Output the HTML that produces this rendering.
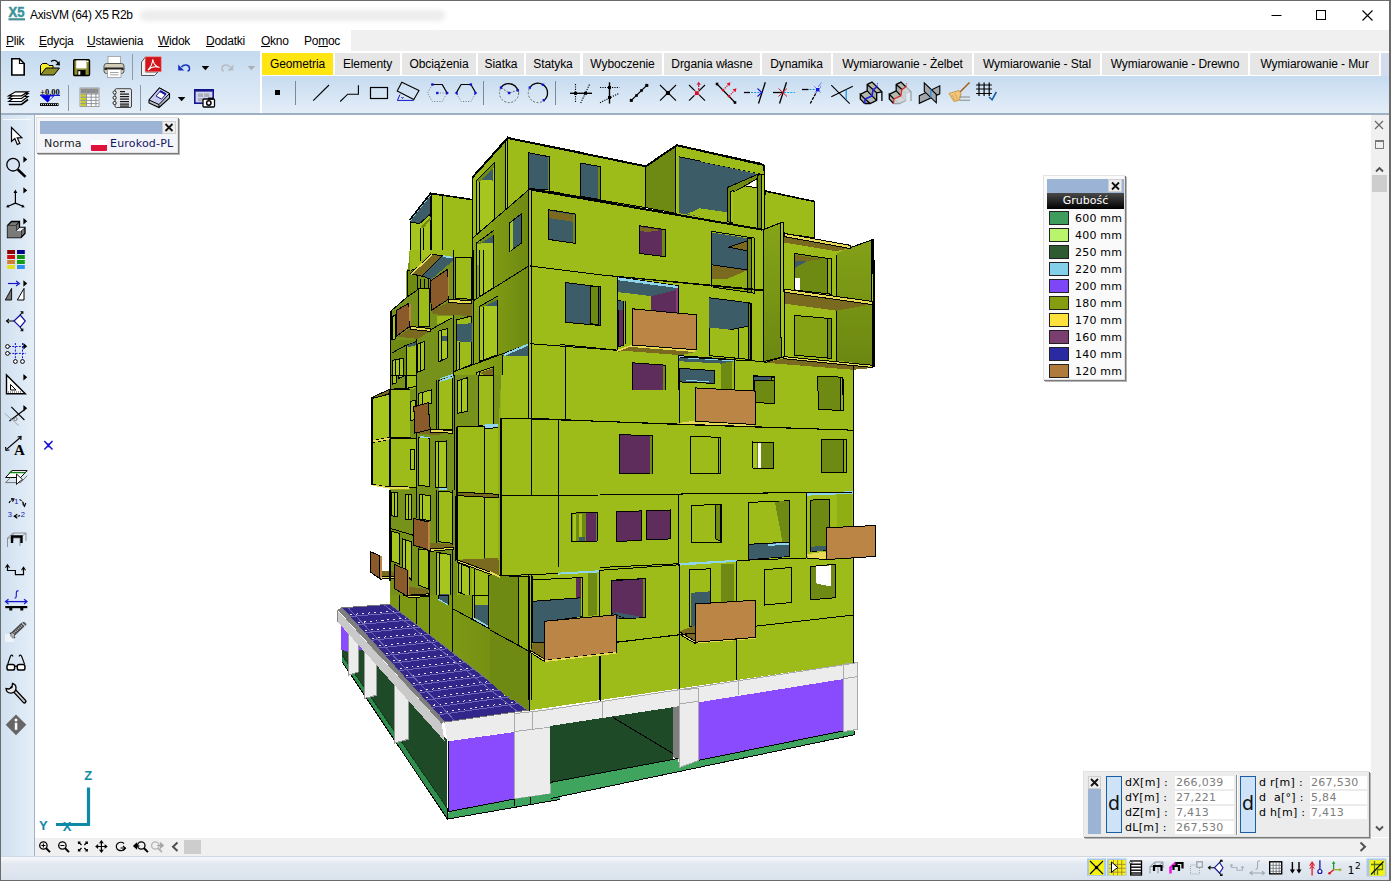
<!DOCTYPE html>
<html lang="pl">
<head>
<meta charset="utf-8">
<title>AxisVM (64) X5 R2b</title>
<style>
*{box-sizing:border-box;margin:0;padding:0}
html,body{width:1391px;height:881px;overflow:hidden;background:#fff}
body{position:relative;font-family:"Liberation Sans",sans-serif;font-size:12px;color:#000}
.abs{position:absolute}
#win{position:absolute;left:0;top:0;width:1391px;height:881px;background:#fff;overflow:hidden}
#frame{position:absolute;left:0;top:0;width:1391px;height:881px;border:1px solid #6b6b6b;border-right:2px solid #6b6b6b;border-bottom:none;pointer-events:none;z-index:50}
#title{left:0;top:0;width:1391px;height:30px;background:#fff}
#title .t{position:absolute;left:30px;top:8px;font-size:12px;letter-spacing:-0.34px;color:#000}
#menubar{left:0;top:30px;width:1391px;height:21px;background:#f0f0f0}
#menubar .w{position:absolute;left:0;top:0;width:351px;height:21px;background:#fff}
#menubar span{position:absolute;top:4px;font-size:12px;letter-spacing:-0.25px;white-space:nowrap}
#menubar u{text-decoration:underline;text-underline-offset:1px}
#tbleft{left:0;top:51px;width:260px;height:62px;background:linear-gradient(#c4daef,#e4eef8)}
#tabrow{left:260px;top:51px;width:1129px;height:25px;background:#fff}
.tab{position:absolute;top:2px;height:22px;background:#e6e6e6;font-size:12px;text-align:center;line-height:22px;white-space:nowrap;letter-spacing:-0.1px}
.tab.sel{background:#ffe512}
#tbgeo{left:262px;top:76px;width:1127px;height:37px;background:linear-gradient(#c6dbf0,#e4eef8)}
#tbline{left:0;top:113px;width:1391px;height:2px;background:#9fb0c2}
#lefttb{left:0;top:115px;width:35px;height:741px;background:linear-gradient(90deg,#d0e0f0,#e4eef8);border-right:1px solid #a3b3c4}
#view{left:35px;top:115px;width:1336px;height:723px;background:#fff}
#vscroll{left:1371px;top:115px;width:20px;height:722px;background:#f0f0f0}
#hscroll{left:35px;top:838px;width:1356px;height:18px;background:#f0f0f0}
#status{left:0;top:856px;width:1391px;height:25px;background:linear-gradient(#f6f8fb,#e3e9f1 30%,#d9e2ec);border-top:1px solid #cfd8e2;border-bottom:1px solid #6b6b6b}
.dv{font-family:"DejaVu Sans","Liberation Sans",sans-serif}

.pnl{position:absolute;background:#f4f4f4;border:1px solid #e3e3e3;box-shadow:1px 1px 0 #7a7a7a, 2px 2px 0 #b5b5b5;z-index:20}
.pnl .bar{position:absolute;background:#9bb4d6}
.xb{position:absolute;background:#ededed;border:1px solid #cfcfcf}
.xb svg{position:absolute;left:0;top:0}
#leg .hd{position:absolute;left:3px;top:17px;width:77px;height:16px;background:linear-gradient(#4a4a4a,#000);color:#fff;font-size:11px;text-align:center;line-height:15px}
#leg .r{position:absolute;left:5px;width:76px;height:14px;font-size:11px;line-height:14px;white-space:nowrap}
#leg .r i{position:absolute;left:0;top:0;width:20px;height:14px;border:1px solid #222}
#leg .r span{position:absolute;left:26px;top:1px;letter-spacing:0.2px}
#crd{font-size:11px;line-height:13px}
#crd .lb{position:absolute;white-space:nowrap;letter-spacing:0.3px}
#crd .vb{position:absolute;background:#fff;height:13px;color:#7d7d7d;padding-left:1px;white-space:nowrap;letter-spacing:0.3px}
#crd .d{position:absolute;background:#cfe3f8;border:1px solid #1a5da6;font-size:19px;line-height:52px;text-align:center;color:#111}
.sbtn{position:absolute;color:#505050}
</style>
</head>
<body>
<div id="win">
<div id="title" class="abs"><span class="t">AxisVM (64) X5 R2b</span></div>
<div id="menubar" class="abs"><div class="w"></div>
<span style="left:6px"><u>P</u>lik</span>
<span style="left:39px"><u>E</u>dycja</span>
<span style="left:87px"><u>U</u>stawienia</span>
<span style="left:158px"><u>W</u>idok</span>
<span style="left:206px"><u>D</u>odatki</span>
<span style="left:261px"><u>O</u>kno</span>
<span style="left:304px">Po<u>m</u>oc</span>
</div>
<div id="tbleft" class="abs"></div>
<div id="tabrow" class="abs">
<div class="tab sel" style="left:2px;width:71px">Geometria</div>
<div class="tab" style="left:75px;width:65px">Elementy</div>
<div class="tab" style="left:142px;width:74px">Obciążenia</div>
<div class="tab" style="left:218px;width:46px">Siatka</div>
<div class="tab" style="left:266px;width:54px">Statyka</div>
<div class="tab" style="left:323px;width:79px">Wyboczenie</div>
<div class="tab" style="left:404px;width:96px">Drgania własne</div>
<div class="tab" style="left:502px;width:69px">Dynamika</div>
<div class="tab" style="left:573px;width:139px">Wymiarowanie - Żelbet</div>
<div class="tab" style="left:714px;width:126px">Wymiarowanie - Stal</div>
<div class="tab" style="left:842px;width:146px">Wymiarowanie - Drewno</div>
<div class="tab" style="left:990px;width:129px">Wymiarowanie - Mur</div>
</div>
<div id="tabend" class="abs" style="left:1381px;top:53px;width:8px;height:23px;background:#d4ddef"></div>
<div id="tbgeo" class="abs"></div>
<div id="tbline" class="abs"></div>
<div id="lefttb" class="abs"></div>
<div id="view" class="abs"></div>
<svg id="bld" class="abs" style="left:0;top:0" width="1391" height="881" viewBox="0 0 1391 881" shape-rendering="crispEdges">
<defs><linearGradient id="gL" gradientUnits="userSpaceOnUse" x1="473" y1="0" x2="510" y2="0"><stop offset="0" stop-color="#9ebd1b"/><stop offset="0.5" stop-color="#92b116"/><stop offset="1" stop-color="#82a113"/></linearGradient><linearGradient id="gL2" gradientUnits="userSpaceOnUse" x1="473" y1="0" x2="530" y2="0"><stop offset="0" stop-color="#8aa716"/><stop offset="0.5" stop-color="#7b9713"/><stop offset="1" stop-color="#6d8911"/></linearGradient><linearGradient id="gF" gradientUnits="userSpaceOnUse" x1="0" y1="225" x2="0" y2="365"><stop offset="0" stop-color="#86a418"/><stop offset="1" stop-color="#6c8711"/></linearGradient><linearGradient id="gW" gradientUnits="userSpaceOnUse" x1="390" y1="0" x2="530" y2="0"><stop offset="0" stop-color="#88a416"/><stop offset="1" stop-color="#6e8911"/></linearGradient></defs>
<polygon points="529.6,189.3 762.0,229.6 853.0,246.0 853.3,663.0 529.7,710.3 529.7,577.0 501.0,575.4 501.0,418.1 529.6,418.6" fill="#9dbc1a"/>
<polygon points="507.9,137.7 645.8,166.0 645.8,209.4 529.6,189.3 507.9,209.2" fill="#9dbc1a"/>
<polygon points="507.9,137.7 472.6,176.6 472.6,199.3 430.5,193.0 409.7,219.5 409.4,271.0 406.3,271.0 406.3,310.7 391.0,310.7 391.0,389.5 372.3,397.5 372.3,484.9 390.4,486.5 390.4,604.0 525.0,710.3 529.7,710.3 529.7,577.0 501.0,575.4 501.0,418.1 529.6,418.6 529.6,189.3 507.9,209.2" fill="#8eae14"/>
<polygon points="472.6,176.6 507.1,137.7 507.9,209.2 472.6,238.1" fill="url(#gL)" stroke="#000" stroke-width="1"/>
<polygon points="505.5,140.1 507.9,137.7 507.9,209.2 505.5,211.1" fill="#a6c51f" stroke="#000" stroke-width="1"/>
<polygon points="507.9,137.7 580.0,152.0 580.0,194.9 529.3,189.3 507.9,209.2" fill="#9dbc1a"/>
<polyline points="580.0,194.9 529.3,189.3 507.9,209.2 507.9,137.7 580.0,152.0" fill="none" stroke="#000" stroke-width="1"/>
<polygon points="476.1,180.9 494.1,162.8 494.1,220.0 476.1,234.6" fill="#a6c51f" stroke="#000" stroke-width="1"/>
<polygon points="479.3,180.9 493.1,167.6 493.1,180.6 481.7,179.8" fill="#3c5d67"/>
<polygon points="476.6,180.9 493.7,163.6 493.7,168.2 479.4,181.9" fill="#6f8a12"/>
<polyline points="479.4,181.9 479.4,231.8" fill="none" stroke="#000" stroke-width="1"/>
<polygon points="528.5,152.8 549.7,156.8 549.7,190.1 528.5,188.5" fill="#3c5d67" stroke="#000" stroke-width="1"/>
<polygon points="547.6,156.8 549.3,157.1 549.3,189.8 547.6,189.7" fill="#6f8a12"/>
<polygon points="430.5,193.0 472.1,199.3 472.1,257.6 430.5,253.7" fill="#9dbc1a"/>
<polyline points="430.5,253.7 430.5,193.0 472.1,199.3" fill="none" stroke="#000" stroke-width="1"/>
<polygon points="431.6,193.6 442.7,195.2 442.7,254.5 431.6,253.4" fill="#a6c51f" stroke="#000" stroke-width="1"/>
<polygon points="409.7,219.5 430.5,193.6 430.5,214.0 419.7,223.5 411.0,222.2" fill="#3c5d67" stroke="#000" stroke-width="1"/>
<polygon points="409.7,219.5 430.5,193.6 430.5,195.7 410.5,220.8" fill="#8fd6ea"/>
<polygon points="410.2,222.2 419.7,223.5 430.5,214.0 430.5,253.7 419.7,265.0 410.2,265.0" fill="#a6c51f" stroke="#000" stroke-width="1"/>
<polygon points="420.5,226.7 430.5,216.8 430.5,220.3 422.9,228.3" fill="#6f8a12"/>
<polyline points="420.5,227.5 420.5,261.6" fill="none" stroke="#000" stroke-width="1"/>
<polyline points="423.2,228.3 423.2,260.0" fill="none" stroke="#000" stroke-width="1"/>
<polygon points="472.6,238.1 529.3,189.3 529.3,299.7 472.6,299.7" fill="url(#gL2)"/>
<polyline points="472.6,265.0 472.6,238.1 529.3,189.3 529.3,265.0" fill="none" stroke="#000" stroke-width="1"/>
<polygon points="476.1,243.3 493.6,230.6 493.6,265.0 476.1,265.0" fill="#a6c51f"/>
<polyline points="476.1,265.0 476.1,243.3 493.6,230.6 493.6,265.0" fill="none" stroke="#000" stroke-width="1"/>
<polygon points="479.3,243.3 493.1,234.6 493.1,242.6" fill="#3c5d67"/>
<polygon points="476.6,243.8 493.7,231.1 493.7,234.9 479.4,244.5" fill="#6f8a12"/>
<polygon points="509.9,222.7 521.1,214.0 521.1,243.3 509.9,251.3" fill="#3c5d67" stroke="#000" stroke-width="1"/>
<polygon points="510.3,223.0 513.4,220.3 513.4,248.6 510.3,250.8" fill="#a6c51f"/>
<polygon points="548.4,209.7 575.1,214.0 575.1,243.3 548.4,239.4" fill="#3c5d67" stroke="#000" stroke-width="1"/>
<polygon points="548.7,210.8 573.0,214.8 573.0,221.9 548.7,217.9" fill="#7a6a20"/>
<polygon points="573.0,214.3 574.9,214.6 574.9,242.9 573.0,242.6" fill="#6f8a12"/>
<polygon points="560.0,148.5 645.8,166.0 645.8,207.6 560.0,193.3" fill="#9dbc1a"/>
<polyline points="560.0,148.5 645.8,166.0" fill="none" stroke="#000" stroke-width="1"/>
<polyline points="560.0,193.3 645.8,207.6" fill="none" stroke="#000" stroke-width="1"/>
<polygon points="580.3,163.1 600.5,166.6 600.5,199.7 580.3,196.2" fill="#3c5d67" stroke="#000" stroke-width="1"/>
<polygon points="598.4,166.6 600.2,166.9 600.2,199.3 598.4,199.0" fill="#6f8a12"/>
<polygon points="645.8,166.0 675.2,145.7 675.2,213.2 645.8,207.6" fill="#6f8a12" stroke="#000" stroke-width="1"/>
<polygon points="675.2,145.7 678.3,145.3 678.3,213.6 675.2,213.2" fill="#a6c51f" stroke="#000" stroke-width="1"/>
<polygon points="676.8,144.9 760.0,163.1 760.0,229.8 676.8,214.0" fill="#9dbc1a"/>
<polygon points="678.8,156.8 760.0,172.7 760.0,226.7 678.8,213.2" fill="#3c5d67"/>
<polyline points="678.8,156.8 760.0,172.7" fill="none" stroke="#000" stroke-width="1"/>
<polyline points="676.8,144.9 760.0,163.1" fill="none" stroke="#000" stroke-width="1"/>
<polygon points="687.1,214.0 701.4,207.6 726.8,210.8 726.8,221.9" fill="#9dbc1a"/>
<polygon points="700.1,207.6 703.8,207.3 703.8,217.9 700.1,217.1" fill="#a6c51f" stroke="#000" stroke-width="1"/>
<polygon points="700.0,149.8 763.5,164.6 764.3,229.0 700.0,219.1" fill="#9dbc1a"/>
<polygon points="700.0,161.4 758.0,174.2 727.0,187.7 727.0,219.4 700.0,214.7" fill="#3c5d67"/>
<polygon points="700.0,208.3 727.0,212.3 727.0,222.6 700.0,218.6" fill="#9dbc1a"/>
<polyline points="700.0,161.4 763.5,174.2" fill="none" stroke="#000" stroke-width="1"/>
<polygon points="727.0,187.7 758.0,174.2 758.0,178.1 733.4,192.4 733.4,222.6 727.0,221.8" fill="#6f8a12" stroke="#000" stroke-width="1"/>
<polygon points="730.2,191.6 733.4,190.5 733.4,222.6 730.2,222.1" fill="#a6c51f" stroke="#000" stroke-width="1"/>
<polygon points="733.4,192.4 746.1,186.1 757.2,187.7 757.2,228.2 733.4,223.4" fill="#9dbc1a"/>
<polygon points="757.2,175.7 761.2,174.2 761.2,229.0 757.2,228.2" fill="#6f8a12" stroke="#000" stroke-width="1"/>
<polygon points="761.2,174.2 764.3,174.2 764.3,229.3 761.2,229.0" fill="#a6c51f" stroke="#000" stroke-width="1"/>
<polygon points="746.1,186.1 756.4,179.7 756.4,188.5" fill="#fff"/>
<polyline points="746.1,186.1 757.2,187.7" fill="none" stroke="#000" stroke-width="1"/>
<polygon points="700.0,149.8 763.5,164.6 763.5,174.2 700.0,161.4" fill="#9dbc1a"/>
<polyline points="700.0,149.8 763.5,164.6 764.3,174.2" fill="none" stroke="#000" stroke-width="1"/>
<polygon points="765.1,190.8 814.4,201.2 814.4,237.7 784.2,233.7 782.6,222.6 764.3,229.0" fill="#9dbc1a" stroke="#000" stroke-width="1"/>
<polygon points="700.0,219.1 764.3,229.8 764.3,280.0 700.0,280.0" fill="#9dbc1a"/>
<polyline points="700.0,219.1 764.3,229.8" fill="none" stroke="#000" stroke-width="1"/>
<polygon points="784.3,239.2 836.8,253.5 836.8,360.6 784.3,356.8" fill="#9dbc1a"/>
<polygon points="836.8,253.5 849.5,247.8 872.7,239.8 873.3,365.3 836.8,360.6" fill="url(#gF)"/>
<polygon points="871.7,239.8 873.9,239.2 874.6,366.3 872.3,365.7" fill="#a6c51f" stroke="#000" stroke-width="1"/>
<polyline points="849.5,247.8 872.7,239.8" fill="none" stroke="#000" stroke-width="1"/>
<polygon points="784.2,236.1 850.1,248.0 836.6,251.2 784.2,242.5" fill="#7a6a20"/>
<polygon points="784.2,233.4 850.1,245.3 850.1,248.5 784.2,236.6" fill="#e9da55" stroke="#000" stroke-width="1"/>
<polyline points="836.8,255.1 836.8,360.6" fill="none" stroke="#000" stroke-width="1"/>
<polygon points="794.5,253.5 831.0,258.9 831.0,294.2 794.5,290.0" fill="#6f8a12" stroke="#000" stroke-width="1"/>
<polygon points="795.1,255.1 822.5,259.2 803.4,261.4 795.1,260.5" fill="#7a6a20"/>
<polygon points="795.1,260.5 806.6,261.4 795.1,267.8" fill="#3c5d67"/>
<polygon points="794.5,277.9 800.2,277.9 800.2,290.0 794.5,289.4" fill="#fff"/>
<polygon points="827.5,258.6 831.0,258.9 831.0,294.2 827.5,293.5" fill="#8eae14" stroke="#000" stroke-width="1"/>
<polygon points="784.3,291.9 871.7,304.3 836.8,310.7 785.0,303.7" fill="#7a6a20"/>
<polygon points="784.3,289.1 872.3,301.5 872.3,304.6 784.3,292.2" fill="#e9da55" stroke="#000" stroke-width="1"/>
<polygon points="794.5,315.4 831.0,318.6 831.0,358.3 794.5,355.2" fill="#84a214" stroke="#000" stroke-width="1"/>
<polygon points="827.5,318.3 831.0,318.6 831.0,358.3 827.5,358.0" fill="#6f8a12" stroke="#000" stroke-width="1"/>
<polygon points="764.4,362.7 783.7,358.5 872.4,367.5 864.9,369.0 852.4,369.7" fill="#7a6a20"/>
<polygon points="783.7,356.6 872.7,365.3 872.7,367.5 783.7,358.7" fill="#e9da55" stroke="#000" stroke-width="1"/>
<polyline points="764.4,362.7 783.7,356.9" fill="none" stroke="#000" stroke-width="1"/>
<polyline points="763.7,361.5 784.3,356.8" fill="none" stroke="#000" stroke-width="1"/>
<polygon points="763.7,229.6 781.8,222.3 782.7,356.8 763.7,361.5" fill="url(#gF)" stroke="#000" stroke-width="1"/>
<polygon points="780.5,223.0 783.7,222.3 784.3,356.8 781.1,357.4" fill="#a6c51f" stroke="#000" stroke-width="1"/>
<polyline points="600.0,202.0 762.1,229.6" fill="none" stroke="#000" stroke-width="1"/>
<polygon points="639.7,225.8 665.1,229.6 665.1,256.7 639.7,253.5" fill="#5f2d5b" stroke="#000" stroke-width="1"/>
<polygon points="662.0,229.6 664.8,230.0 664.8,256.0 662.0,255.7" fill="#6f8a12"/>
<polygon points="640.4,227.1 662.0,230.0 647.7,231.9 640.4,231.2" fill="#7a6a20"/>
<polygon points="711.2,231.2 754.8,238.2 754.8,293.2 711.2,286.8" fill="#9dbc1a" stroke="#000" stroke-width="1"/>
<polygon points="711.9,232.5 747.8,238.2 747.8,270.0 711.9,264.9" fill="#3c5d67"/>
<polygon points="728.7,247.1 747.8,240.8 747.8,250.9" fill="#7a6a20" stroke="#000" stroke-width="1"/>
<polygon points="711.9,265.5 747.8,270.0 727.1,278.9 711.9,278.9" fill="#7a6a20"/>
<polygon points="711.9,278.9 727.1,278.9 747.8,270.0 747.8,291.6 711.9,286.5" fill="#8eae14"/>
<polyline points="711.9,264.9 747.8,270.0" fill="none" stroke="#000" stroke-width="1"/>
<polygon points="747.8,238.2 751.3,238.9 751.3,292.6 747.8,291.9" fill="#6f8a12" stroke="#000" stroke-width="1"/>
<polyline points="600.0,274.8 763.7,290.0" fill="none" stroke="#000" stroke-width="1"/>
<polygon points="565.6,282.6 600.5,286.9 600.5,325.5 565.6,322.3" fill="#3c5d67" stroke="#000" stroke-width="1"/>
<polygon points="590.2,285.9 598.9,287.0 598.9,324.7 590.2,323.7" fill="#6f8a12" stroke="#000" stroke-width="1"/>
<polygon points="617.2,277.0 678.3,285.7 678.3,351.7 617.2,350.1" fill="#9dbc1a" stroke="#000" stroke-width="1"/>
<polygon points="618.0,280.2 677.6,288.1 676.0,290.0 651.3,296.1 618.0,292.1" fill="#3c5d67"/>
<polygon points="618.0,277.3 677.6,285.9 677.6,288.1 618.0,280.2" fill="#8fd6ea"/>
<polygon points="651.3,296.1 675.6,290.0 675.6,312.7 651.3,310.4" fill="#5f2d5b"/>
<polygon points="618.0,300.8 623.5,301.2 623.5,345.3 618.0,346.9" fill="#5f2d5b" stroke="#000" stroke-width="1"/>
<polygon points="618.1,301.2 623.4,301.5 623.4,309.6 618.1,310.0" fill="#3c5d67"/>
<polygon points="675.6,288.1 678.0,287.8 678.0,313.5 675.6,312.9" fill="#8a3c80"/>
<polyline points="625.1,300.8 625.1,343.7" fill="none" stroke="#000" stroke-width="1"/>
<polygon points="617.2,351.7 629.9,346.9 695.0,352.0 680.7,355.2 626.7,351.0" fill="#7a6a20"/>
<polygon points="617.2,349.8 632.3,344.7 696.3,349.8 694.7,352.0 629.9,346.9 617.5,351.7" fill="#e9da55"/>
<polygon points="709.0,297.7 751.4,303.2 751.4,359.6 709.0,355.6" fill="#9dbc1a" stroke="#000" stroke-width="1"/>
<polygon points="709.3,298.3 748.2,303.2 748.2,326.3 730.0,329.7 709.3,327.5" fill="#3c5d67"/>
<polyline points="730.0,329.7 748.2,326.3" fill="none" stroke="#000" stroke-width="1"/>
<polyline points="738.7,328.6 738.7,357.7" fill="none" stroke="#000" stroke-width="1"/>
<polygon points="748.2,303.2 750.2,303.4 750.2,359.3 748.2,359.0" fill="#6f8a12" stroke="#000" stroke-width="1"/>
<polyline points="560.0,344.5 617.2,350.1" fill="none" stroke="#000" stroke-width="1"/>
<polyline points="565.6,345.3 565.6,390.0" fill="none" stroke="#000" stroke-width="1"/>
<polygon points="632.3,362.8 665.6,365.2 665.6,390.0 632.3,390.0" fill="#5f2d5b"/>
<polygon points="662.9,365.0 665.3,365.2 665.3,390.0 662.9,390.0" fill="#6f8a12"/>
<polyline points="632.3,390.0 632.3,362.8 665.6,365.2 665.6,390.0" fill="none" stroke="#000" stroke-width="1"/>
<polygon points="678.3,355.6 734.7,359.6 734.7,390.0 678.3,390.0" fill="#9dbc1a"/>
<polygon points="678.8,355.8 734.4,359.6 734.4,361.2 678.8,358.0" fill="#8fd6ea"/>
<polygon points="678.8,358.0 734.4,361.2 721.2,363.6 678.8,361.2" fill="#3c5d67"/>
<polygon points="721.2,363.6 732.4,361.2 732.4,390.0 721.2,390.0" fill="#6f8a12"/>
<polygon points="679.9,368.3 714.9,370.7 714.9,383.4 679.9,381.9" fill="#3c5d67" stroke="#000" stroke-width="1"/>
<polygon points="685.5,379.9 709.3,381.2 709.3,382.2 685.5,380.9" fill="#8fd6ea"/>
<polyline points="678.3,390.0 678.3,355.6 734.7,359.6 734.7,390.0" fill="none" stroke="#000" stroke-width="1"/>
<polyline points="734.7,358.0 751.4,359.6" fill="none" stroke="#000" stroke-width="1"/>
<polygon points="753.8,375.5 760.0,376.3 760.0,390.0 753.8,390.0" fill="#3c5d67" stroke="#000" stroke-width="1"/>
<polygon points="753.5,376.0 774.3,376.8 774.3,403.7 755.6,402.2" fill="#6f8a12" stroke="#000" stroke-width="1"/>
<polygon points="754.0,376.5 771.2,377.2 771.2,379.3 754.0,381.2" fill="#3c5d67"/>
<polygon points="771.9,377.0 774.1,377.1 774.1,403.4 771.9,403.2" fill="#8eae14" stroke="#000" stroke-width="1"/>
<polygon points="817.7,376.2 843.0,377.2 843.4,410.6 818.4,409.3" fill="#6f8a12" stroke="#000" stroke-width="1"/>
<polygon points="840.5,377.2 842.8,377.3 843.2,410.3 840.5,410.1" fill="#8eae14" stroke="#000" stroke-width="1"/>
<polygon points="679.4,422.9 695.3,420.7 755.7,424.5 752.5,427.0 681.0,424.5" fill="#e9da55"/>
<polyline points="679.4,380.0 679.4,422.9" fill="none" stroke="#000" stroke-width="1"/>
<polygon points="754.1,380.0 774.2,380.0 774.2,403.8 754.1,402.2" fill="#6f8a12" stroke="#000" stroke-width="1"/>
<polyline points="528.5,418.1 600.0,421.3 679.4,424.5 852.6,430.2" fill="none" stroke="#000" stroke-width="1"/>
<polygon points="619.7,434.7 652.4,435.6 652.4,473.7 619.7,473.1" fill="#5f2d5b" stroke="#000" stroke-width="1"/>
<polygon points="649.9,435.6 652.4,435.6 652.4,473.7 649.9,473.7" fill="#6f8a12"/>
<polygon points="690.6,436.6 720.8,437.2 720.8,473.7 690.6,473.1" fill="#9dbc1a" stroke="#000" stroke-width="1"/>
<polygon points="718.2,437.2 720.8,437.2 720.8,473.7 718.2,473.7" fill="#8eae14" stroke="#000" stroke-width="1"/>
<polygon points="752.5,442.0 773.8,442.6 773.8,468.3 752.5,468.0" fill="#6f8a12" stroke="#000" stroke-width="1"/>
<polygon points="757.9,442.6 761.4,442.6 761.4,468.0 757.9,468.0" fill="#fff"/>
<polygon points="753.2,442.6 757.3,442.6 757.3,468.0 753.2,468.0" fill="#a6c51f"/>
<polygon points="821.5,439.4 846.3,439.7 846.3,472.8 821.5,472.2" fill="#6f8a12" stroke="#000" stroke-width="1"/>
<polygon points="843.1,439.7 846.0,439.7 846.0,472.5 843.1,472.5" fill="#8eae14" stroke="#000" stroke-width="1"/>
<polyline points="501.5,496.0 600.0,495.0 852.6,491.9" fill="none" stroke="#000" stroke-width="1"/>
<polyline points="678.5,495.0 678.5,565.9" fill="none" stroke="#000" stroke-width="1"/>
<polygon points="616.5,511.9 641.3,510.9 641.3,540.5 616.5,541.4" fill="#5f2d5b" stroke="#000" stroke-width="1"/>
<polygon points="646.7,510.9 670.6,510.0 670.6,538.9 646.7,539.9" fill="#5f2d5b" stroke="#000" stroke-width="1"/>
<polygon points="691.2,505.5 721.4,504.3 721.4,542.1 691.2,543.0" fill="#9dbc1a" stroke="#000" stroke-width="1"/>
<polygon points="715.0,504.9 720.8,504.6 720.8,541.4 715.0,538.3" fill="#6f8a12" stroke="#000" stroke-width="1"/>
<polygon points="748.4,502.4 789.7,500.8 789.7,556.4 748.4,559.6" fill="#9dbc1a" stroke="#000" stroke-width="1"/>
<polygon points="774.8,501.7 789.1,501.1 789.1,542.1 782.7,542.7" fill="#6f8a12"/>
<polygon points="748.7,544.3 789.4,542.1 789.4,556.1 748.7,559.2" fill="#3c5d67"/>
<polygon points="768.4,544.0 789.4,542.7 789.4,544.6 768.4,545.9" fill="#8fd6ea"/>
<polyline points="748.7,544.3 789.4,542.1" fill="none" stroke="#000" stroke-width="1"/>
<polygon points="806.6,493.8 852.6,491.9 852.6,554.2 806.6,558.0" fill="#9dbc1a"/>
<polygon points="806.6,492.8 852.6,491.2 852.6,493.8 806.6,495.7" fill="#8fd6ea"/>
<polygon points="836.8,494.4 852.0,493.8 852.0,553.2 836.8,529.4" fill="#8eae14"/>
<polygon points="810.4,500.1 829.4,499.5 829.4,550.0 810.4,551.6" fill="#6f8a12" stroke="#000" stroke-width="1"/>
<polygon points="811.0,546.8 828.8,545.3 828.8,550.0 811.0,551.6" fill="#3c5d67"/>
<polyline points="806.6,492.8 806.6,558.0" fill="none" stroke="#000" stroke-width="1"/>
<polygon points="806.6,554.2 826.3,551.6 826.3,559.6 808.2,558.0" fill="#e9da55"/>
<polyline points="600.0,567.5 679.4,563.7 736.7,560.5 806.6,558.0 826.3,559.6" fill="none" stroke="#000" stroke-width="1"/>
<polyline points="854.2,554.2 875.8,556.4" fill="none" stroke="#000" stroke-width="1"/>
<polygon points="679.4,563.0 736.7,559.9 736.7,561.8 679.4,565.6" fill="#8fd6ea"/>
<polygon points="611.8,580.2 645.4,578.6 645.4,616.8 611.8,619.0" fill="#5f2d5b" stroke="#000" stroke-width="1"/>
<polygon points="614.3,612.0 645.4,607.2 645.4,616.8 611.8,619.0" fill="#3c5d67"/>
<polygon points="720.8,564.3 733.5,563.7 733.5,602.5 720.8,604.0" fill="#6f8a12"/>
<polygon points="689.9,569.7 710.6,568.8 710.6,624.7 689.9,626.3" fill="#9dbc1a" stroke="#000" stroke-width="1"/>
<polygon points="690.6,592.9 710.0,591.3 710.0,624.7 690.6,626.3" fill="#3c5d67"/>
<polyline points="679.4,564.3 679.4,660.0" fill="none" stroke="#000" stroke-width="1"/>
<polyline points="736.7,560.5 736.7,660.0" fill="none" stroke="#000" stroke-width="1"/>
<polygon points="680.1,631.1 695.3,625.3 695.3,641.2 682.0,635.5" fill="#7a6a20"/>
<polygon points="679.4,631.7 695.3,641.2 695.3,643.5 679.4,634.2" fill="#e9da55" stroke="#000" stroke-width="1"/>
<polygon points="695.3,641.2 755.7,636.8 755.7,638.7 695.3,643.5" fill="#e9da55"/>
<polygon points="764.6,569.7 791.3,567.5 791.3,602.5 764.6,605.0" fill="#9dbc1a" stroke="#000" stroke-width="1"/>
<polygon points="810.4,566.5 835.2,564.3 835.2,597.7 810.4,599.9" fill="#6f8a12" stroke="#000" stroke-width="1"/>
<polygon points="816.1,566.5 831.4,565.3 831.4,586.6 816.1,583.4" fill="#fff"/>
<polyline points="590.0,645.1 853.8,615.0" fill="none" stroke="#000" stroke-width="1"/>
<polyline points="679.9,630.8 679.9,689.6" fill="none" stroke="#000" stroke-width="1"/>
<polyline points="736.8,627.7 736.8,680.1" fill="none" stroke="#000" stroke-width="1"/>
<polygon points="571.6,513.1 597.5,512.5 597.5,541.0 571.6,541.8" fill="#6f8a12" stroke="#000" stroke-width="1"/>
<polygon points="572.6,514.0 576.0,514.0 576.0,541.0 572.6,541.0" fill="#a6c51f"/>
<polygon points="579.0,514.0 582.0,514.0 582.0,541.0 579.0,541.0" fill="#a6c51f"/>
<polygon points="585.5,513.5 595.5,513.2 595.5,540.5 585.5,540.8" fill="#5f2d5b"/>
<polygon points="579.0,537.0 585.0,537.0 585.0,541.0 579.0,541.0" fill="#3c5d67"/>
<polygon points="390.7,311.2 407.3,296.9 407.3,270.7 410.5,250.0 473.3,250.0 473.3,390.0 390.7,390.0" fill="#77921a"/>
<polygon points="409.7,250.0 473.3,250.0 473.3,257.9 452.6,257.1 431.2,254.4 409.7,273.8" fill="#9dbc1a"/>
<polygon points="473.3,297.7 528.9,262.7 528.9,344.0 473.3,364.7" fill="url(#gL2)"/>
<polyline points="473.3,300.8 528.9,265.9" fill="none" stroke="#000" stroke-width="1"/>
<polyline points="473.3,250.0 473.3,364.7" fill="none" stroke="#000" stroke-width="1"/>
<polyline points="476.1,250.0 476.1,299.2" fill="none" stroke="#000" stroke-width="1"/>
<polygon points="479.6,306.4 497.9,296.1 497.9,354.8 479.6,361.2" fill="#a6c51f" stroke="#000" stroke-width="1"/>
<polygon points="483.6,305.9 497.1,299.6 497.1,305.9" fill="#3c5d67"/>
<polygon points="480.1,306.7 497.6,296.7 497.6,299.9 483.6,306.6" fill="#6f8a12"/>
<polyline points="483.6,306.6 483.6,359.6" fill="none" stroke="#000" stroke-width="1"/>
<polygon points="454.2,371.5 473.3,364.7 528.9,344.0 528.9,390.0 454.2,390.0" fill="url(#gL2)"/>
<polyline points="454.2,371.5 473.3,364.7 528.9,344.0" fill="none" stroke="#000" stroke-width="1"/>
<polygon points="503.4,354.8 528.9,344.0 528.9,356.1 503.4,356.1" fill="#3c5d67"/>
<polygon points="503.4,354.1 528.9,343.2 528.9,345.3 504.2,356.1" fill="#8fd6ea"/>
<polygon points="503.4,356.1 528.9,356.1 528.9,390.0 503.4,390.0" fill="#9dbc1a"/>
<polyline points="502.6,354.8 502.6,390.0" fill="none" stroke="#000" stroke-width="1"/>
<polygon points="476.4,372.6 493.9,366.8 493.9,390.0 476.4,390.0" fill="#a6c51f"/>
<polygon points="479.6,372.6 493.6,367.9 493.6,375.5 486.8,376.3" fill="#7a6a20"/>
<polyline points="476.4,390.0 476.4,372.6 493.9,366.8 493.9,390.0" fill="none" stroke="#000" stroke-width="1"/>
<polyline points="479.6,372.3 479.6,390.0" fill="none" stroke="#000" stroke-width="1"/>
<polygon points="457.1,380.6 467.7,377.1 467.7,390.0 457.1,390.0" fill="#a6c51f"/>
<polyline points="457.1,390.0 457.1,380.6 467.7,377.1 467.7,390.0" fill="none" stroke="#000" stroke-width="1"/>
<polygon points="439.9,378.7 452.6,374.2 452.6,376.3 439.9,380.6" fill="#8fd6ea"/>
<polygon points="455.8,257.1 471.7,257.6 471.7,299.2 455.8,298.5" fill="#9dbc1a" stroke="#000" stroke-width="1"/>
<polygon points="456.6,319.9 471.7,315.9 471.7,364.4 456.6,370.7" fill="#9dbc1a" stroke="#000" stroke-width="1"/>
<polygon points="457.1,323.9 471.7,323.4 471.7,342.5 457.1,341.3" fill="#3c5d67"/>
<polyline points="459.0,342.1 459.0,369.1" fill="none" stroke="#000" stroke-width="1"/>
<polyline points="453.4,250.0 453.4,390.0" fill="none" stroke="#000" stroke-width="1"/>
<polygon points="438.3,331.3 447.0,328.6 447.0,358.0 438.3,362.0" fill="#a6c51f" stroke="#000" stroke-width="1"/>
<polyline points="441.5,330.7 441.5,360.9" fill="none" stroke="#000" stroke-width="1"/>
<polygon points="441.8,336.6 446.7,335.8 446.7,341.3 441.8,340.5" fill="#3c5d67"/>
<polyline points="431.2,329.4 452.6,317.5" fill="none" stroke="#000" stroke-width="1"/>
<polygon points="436.7,315.9 452.6,315.9 452.6,317.5 436.7,324.7" fill="#9dbc1a"/>
<polygon points="418.5,288.9 429.6,288.1 429.6,326.6 418.5,326.6" fill="#9dbc1a" stroke="#000" stroke-width="1"/>
<polygon points="407.3,270.7 417.7,269.1 417.7,289.7 407.3,296.9" fill="#6f8a12" stroke="#000" stroke-width="1"/>
<polyline points="420.0,278.6 420.0,288.1" fill="none" stroke="#000" stroke-width="1"/>
<polyline points="424.0,278.6 424.0,288.1" fill="none" stroke="#000" stroke-width="1"/>
<polyline points="428.0,278.6 428.0,288.1" fill="none" stroke="#000" stroke-width="1"/>
<polygon points="409.7,250.0 420.8,250.0 420.8,261.1 409.7,272.2" fill="#9dbc1a"/>
<polygon points="421.6,250.0 430.4,250.0 430.4,254.0 421.6,259.5" fill="#a6c51f"/>
<polyline points="420.8,250.0 420.8,261.1" fill="none" stroke="#000" stroke-width="1"/>
<polygon points="392.2,316.7 395.4,315.1 395.4,339.0 392.2,340.5" fill="#a6c51f" stroke="#000" stroke-width="1"/>
<polyline points="390.7,311.2 390.7,390.0" fill="none" stroke="#000" stroke-width="2"/>
<polyline points="390.7,311.2 407.3,296.9 407.3,270.7" fill="none" stroke="#000" stroke-width="1"/>
<polygon points="391.4,339.8 416.1,340.5 416.1,390.0 391.4,390.0" fill="#6f8a12"/>
<polyline points="391.4,353.3 405.7,345.3" fill="none" stroke="#000" stroke-width="1"/>
<polygon points="392.2,360.4 403.7,358.0 403.7,377.1 392.2,383.4" fill="#a6c51f" stroke="#000" stroke-width="1"/>
<polyline points="395.4,359.9 395.4,381.9" fill="none" stroke="#000" stroke-width="1"/>
<polyline points="399.4,359.3 399.4,379.5" fill="none" stroke="#000" stroke-width="1"/>
<polygon points="406.2,345.3 416.1,341.8 416.1,390.0 406.2,390.0" fill="#9dbc1a" stroke="#000" stroke-width="1"/>
<polygon points="406.9,345.3 415.8,342.1 415.8,345.3 408.1,347.2" fill="#3c5d67"/>
<polygon points="417.7,344.0 424.8,341.3 424.8,369.1 417.7,372.3" fill="#a6c51f" stroke="#000" stroke-width="1"/>
<polyline points="420.8,342.9 420.8,370.7" fill="none" stroke="#000" stroke-width="1"/>
<polyline points="416.9,339.0 416.9,390.0" fill="none" stroke="#000" stroke-width="1"/>
<polygon points="439.9,378.4 452.6,373.9 452.6,375.8 439.9,380.3" fill="#8fd6ea"/>
<polygon points="410.5,273.8 431.2,254.4 442.3,255.6 422.4,276.2" fill="#7a6a20" stroke="#000" stroke-width="1"/>
<polygon points="410.5,273.8 431.2,254.4 432.7,254.8 411.6,275.1" fill="#e9da55"/>
<polygon points="422.4,276.2 443.1,255.6 452.6,257.1 452.6,261.1 431.2,279.4" fill="#3c5d67"/>
<polygon points="443.1,255.2 452.6,256.7 452.6,258.3 443.4,257.1" fill="#8fd6ea"/>
<polyline points="422.4,276.2 431.2,279.4" fill="none" stroke="#000" stroke-width="1"/>
<polygon points="431.2,310.4 448.6,302.4 471.7,304.0 471.7,315.9 433.5,314.3" fill="#7a6a20"/>
<polygon points="448.6,299.2 471.7,300.8 471.7,304.0 448.6,302.4" fill="#e9da55" stroke="#000" stroke-width="1"/>
<polygon points="430.4,281.0 447.8,269.1 448.6,299.2 431.2,310.4" fill="#8b5a2b" stroke="#000" stroke-width="1"/>
<polygon points="447.8,269.1 449.4,269.4 449.4,299.6 448.6,299.2" fill="#ba8545"/>
<polygon points="397.8,336.6 409.7,328.6 430.4,331.0 417.7,339.0" fill="#7a6a20"/>
<polygon points="409.7,326.3 430.4,328.6 430.4,331.3 410.5,329.4" fill="#e9da55" stroke="#000" stroke-width="1"/>
<polygon points="396.2,310.4 408.9,303.2 409.7,326.3 397.0,335.8" fill="#8b5a2b" stroke="#000" stroke-width="1"/>
<polygon points="408.9,303.2 410.5,303.5 411.0,326.6 409.7,326.3" fill="#ba8545"/>
<polygon points="479.6,250.0 493.6,250.0 493.6,287.8 479.6,296.4" fill="#a6c51f"/>
<polyline points="479.6,250.0 479.6,296.4 493.6,287.8 493.6,250.0" fill="none" stroke="#000" stroke-width="1"/>
<polyline points="483.1,250.0 483.1,294.2" fill="none" stroke="#000" stroke-width="1"/>
<polygon points="410.4,389.2 416.8,387.8 436.6,380.0 455.8,375.0 501.2,375.0 499.0,417.6 498.3,426.1 457.2,426.8 457.2,500.0 410.4,500.0" fill="#77921a"/>
<polygon points="390.2,375.0 405.4,375.0 405.4,388.5 390.2,389.2" fill="#77921a" stroke="#000" stroke-width="1"/>
<polygon points="406.1,375.0 416.8,375.0 416.8,386.3 406.1,388.5" fill="#9dbc1a" stroke="#000" stroke-width="1"/>
<polygon points="392.7,375.0 396.9,375.0 396.9,382.8 392.7,384.2" fill="#a6c51f" stroke="#000" stroke-width="1"/>
<polygon points="398.3,375.0 403.3,375.0 403.3,376.4 398.3,378.5" fill="#a6c51f" stroke="#000" stroke-width="1"/>
<polygon points="372.8,397.0 389.8,389.2 389.8,393.4 373.5,398.8" fill="#7a6a20" stroke="#000" stroke-width="1"/>
<polygon points="372.8,398.4 389.1,394.1 389.1,437.7 372.8,440.5" fill="#a6c51f" stroke="#000" stroke-width="1"/>
<polygon points="372.8,442.4 389.1,439.5 389.1,487.1 372.8,484.5" fill="#a6c51f" stroke="#000" stroke-width="1"/>
<polygon points="372.8,440.5 389.1,437.7 389.1,439.5 372.8,442.4" fill="#e9da55"/>
<polygon points="390.2,389.9 410.4,389.2 410.4,437.4 390.2,437.7" fill="#9dbc1a" stroke="#000" stroke-width="1"/>
<polygon points="390.2,438.8 410.4,438.5 416.1,438.8 416.1,487.1 390.2,486.8" fill="#9dbc1a" stroke="#000" stroke-width="1"/>
<polygon points="410.4,389.2 416.1,388.0 416.1,437.4 410.4,437.4" fill="#77921a"/>
<polygon points="372.8,484.5 389.1,487.1 409.0,487.1 409.0,488.5 389.1,488.5 372.8,485.9" fill="#e9da55"/>
<polyline points="372.1,397.0 372.1,484.9" fill="none" stroke="#000" stroke-width="2"/>
<polyline points="390.2,389.2 390.2,487.1" fill="none" stroke="#000" stroke-width="1"/>
<polygon points="410.1,401.2 415.4,400.5 415.4,419.7 410.1,420.4" fill="#a6c51f" stroke="#000" stroke-width="1"/>
<polygon points="410.1,449.5 414.6,449.0 414.6,469.3 410.1,469.3" fill="#a6c51f" stroke="#000" stroke-width="1"/>
<polygon points="418.9,393.4 431.0,389.9 431.0,403.4 418.9,405.5" fill="#a6c51f" stroke="#000" stroke-width="1"/>
<polyline points="422.4,392.7 422.4,404.1" fill="none" stroke="#000" stroke-width="1"/>
<polygon points="438.8,380.7 452.9,376.4 452.9,429.6 438.8,429.6" fill="#9dbc1a" stroke="#000" stroke-width="1"/>
<polygon points="439.5,380.4 452.9,376.1 452.9,378.1 439.5,382.1" fill="#8fd6ea"/>
<polyline points="436.6,380.0 436.6,429.6" fill="none" stroke="#000" stroke-width="1"/>
<polygon points="457.9,380.7 467.1,377.8 467.1,411.2 457.9,413.3" fill="#a6c51f" stroke="#000" stroke-width="1"/>
<polyline points="461.2,380.0 461.2,412.2" fill="none" stroke="#000" stroke-width="1"/>
<polygon points="418.2,437.4 429.5,438.1 429.5,486.3 418.2,485.6" fill="#9dbc1a" stroke="#000" stroke-width="1"/>
<polygon points="419.6,436.3 429.5,436.8 429.5,438.3 419.6,437.7" fill="#8fd6ea"/>
<polygon points="435.2,441.7 446.6,441.0 446.6,487.1 435.2,487.8" fill="#a6c51f" stroke="#000" stroke-width="1"/>
<polyline points="438.0,441.7 438.0,487.3" fill="none" stroke="#000" stroke-width="1"/>
<polygon points="438.8,487.8 447.3,488.5 447.3,490.6 438.8,489.9" fill="#8fd6ea"/>
<polyline points="416.8,387.8 416.8,500.0" fill="none" stroke="#000" stroke-width="1"/>
<polyline points="454.4,375.0 454.4,500.0" fill="none" stroke="#000" stroke-width="1"/>
<polygon points="414.6,433.2 430.2,429.6 452.9,430.6 437.3,435.3" fill="#7a6a20"/>
<polygon points="430.5,429.6 452.9,430.3 452.9,433.2 431.0,432.4" fill="#e9da55" stroke="#000" stroke-width="1"/>
<polygon points="413.9,406.9 428.1,402.7 430.2,429.6 414.6,433.2" fill="#8b5a2b" stroke="#000" stroke-width="1"/>
<polygon points="501.2,375.0 530.2,375.0 530.2,418.3 501.2,418.3" fill="#9dbc1a"/>
<polygon points="478.5,375.0 493.4,375.0 493.4,424.6 478.5,425.4" fill="#9dbc1a" stroke="#000" stroke-width="1"/>
<polygon points="482.7,424.6 497.6,423.9 497.6,427.5 485.6,428.9" fill="#8fd6ea"/>
<polygon points="457.9,426.8 484.1,426.8 484.1,500.0 457.9,500.0" fill="#9dbc1a"/>
<polygon points="484.9,428.9 497.6,427.5 497.6,500.0 484.9,500.0" fill="#9dbc1a"/>
<polyline points="457.9,500.0 457.9,426.8 484.1,426.8 484.1,500.0" fill="none" stroke="#000" stroke-width="1"/>
<polyline points="484.9,500.0 484.9,428.9 497.6,427.5" fill="none" stroke="#000" stroke-width="1"/>
<polyline points="457.2,426.8 457.2,500.0" fill="none" stroke="#000" stroke-width="2"/>
<polygon points="389.8,490.0 457.2,490.0 457.2,615.0 389.8,615.0" fill="#77921a"/>
<polygon points="457.9,490.0 484.1,490.0 484.1,558.4 457.9,559.5" fill="#9dbc1a"/>
<polygon points="484.9,490.0 498.3,490.0 498.3,557.8 484.9,558.4" fill="#9dbc1a"/>
<polyline points="484.4,495.7 484.4,558.1" fill="none" stroke="#000" stroke-width="1"/>
<polyline points="457.2,490.0 457.2,560.2" fill="none" stroke="#000" stroke-width="2"/>
<polygon points="457.9,492.1 498.3,494.3 498.3,497.8 457.9,495.7" fill="#7a6a20" stroke="#000" stroke-width="1"/>
<polygon points="457.2,559.8 498.3,557.8 498.3,576.8" fill="#7a6a20"/>
<polygon points="457.2,559.8 498.3,575.1 498.3,577.2 457.2,561.9" fill="#e9da55" stroke="#000" stroke-width="1"/>
<polygon points="391.2,492.1 397.6,492.8 397.6,517.0 391.2,515.5" fill="#a6c51f" stroke="#000" stroke-width="1"/>
<polyline points="394.1,492.4 394.1,516.2" fill="none" stroke="#000" stroke-width="1"/>
<polygon points="405.4,494.3 411.8,495.0 411.8,519.8 405.4,519.1" fill="#a6c51f" stroke="#000" stroke-width="1"/>
<polyline points="408.3,494.5 408.3,519.4" fill="none" stroke="#000" stroke-width="1"/>
<polygon points="419.6,494.3 430.2,495.7 430.2,520.5 419.6,519.1" fill="#a6c51f" stroke="#000" stroke-width="1"/>
<polyline points="422.4,494.7 422.4,519.5" fill="none" stroke="#000" stroke-width="1"/>
<polygon points="438.8,491.4 452.2,492.1 452.2,543.2 438.8,541.8" fill="#9dbc1a" stroke="#000" stroke-width="1"/>
<polyline points="436.6,490.0 436.6,542.5" fill="none" stroke="#000" stroke-width="1"/>
<polyline points="416.8,490.0 416.8,518.4" fill="none" stroke="#000" stroke-width="1"/>
<polyline points="389.8,528.3 413.9,535.4" fill="none" stroke="#000" stroke-width="1"/>
<polygon points="391.2,531.1 399.0,533.3 399.0,563.8 391.2,560.9" fill="#a6c51f" stroke="#000" stroke-width="1"/>
<polygon points="402.2,538.9 411.8,541.8 411.8,580.8 402.2,569.4" fill="#a6c51f" stroke="#000" stroke-width="1"/>
<polyline points="405.4,539.9 405.4,573.7" fill="none" stroke="#000" stroke-width="1"/>
<polygon points="418.2,548.9 428.8,550.3 428.8,589.3 418.2,585.0" fill="#9dbc1a" stroke="#000" stroke-width="1"/>
<polygon points="436.6,552.4 450.1,554.5 450.1,606.3 436.6,597.8" fill="#a6c51f" stroke="#000" stroke-width="1"/>
<polygon points="439.9,593.5 449.0,594.3 449.0,604.9 439.9,598.5" fill="#3c5d67"/>
<polyline points="439.5,553.1 439.5,599.2" fill="none" stroke="#000" stroke-width="1"/>
<polygon points="458.6,563.0 469.3,567.3 469.3,597.1 458.6,592.1" fill="#a6c51f" stroke="#000" stroke-width="1"/>
<polyline points="461.5,564.5 461.5,593.5" fill="none" stroke="#000" stroke-width="1"/>
<polygon points="472.1,568.7 487.7,574.4 487.7,604.9 474.9,605.6 472.1,597.8" fill="#9dbc1a"/>
<polyline points="474.2,569.4 474.2,615.0" fill="none" stroke="#000" stroke-width="1"/>
<polygon points="474.9,605.6 488.4,604.9 488.4,615.0 474.9,615.0" fill="#3c5d67"/>
<polygon points="488.4,575.1 519.6,576.5 519.6,615.0 488.4,615.0" fill="#6f8a12" stroke="#000" stroke-width="1"/>
<polygon points="520.3,576.5 528.1,576.8 528.1,615.0 520.3,615.0" fill="#9dbc1a"/>
<polygon points="533.1,576.5 545.0,575.1 545.0,599.9 533.1,602.8" fill="#9dbc1a"/>
<polygon points="533.1,602.8 545.0,599.5 545.0,615.0 533.1,615.0" fill="#3c5d67"/>
<polyline points="529.5,575.8 529.5,615.0" fill="none" stroke="#000" stroke-width="1"/>
<polyline points="532.4,575.8 532.4,615.0" fill="none" stroke="#000" stroke-width="1"/>
<polyline points="429.5,549.6 429.5,597.8" fill="none" stroke="#000" stroke-width="1"/>
<polyline points="452.9,490.0 452.9,607.7" fill="none" stroke="#000" stroke-width="1"/>
<polyline points="455.8,495.7 455.8,560.9" fill="none" stroke="#000" stroke-width="1"/>
<polygon points="430.2,543.2 451.5,543.9 454.4,548.2 430.2,549.6" fill="#7a6a20"/>
<polygon points="430.2,548.9 453.7,547.4 453.7,549.3 430.2,551.3" fill="#e9da55" stroke="#000" stroke-width="1"/>
<polygon points="413.9,518.4 428.1,521.9 428.1,549.6 413.9,545.3" fill="#8b5a2b" stroke="#000" stroke-width="1"/>
<polygon points="428.1,521.9 430.2,522.3 430.2,550.3 428.1,549.6" fill="#ba8545"/>
<polygon points="379.9,570.9 393.4,571.6 394.1,576.5 380.6,577.2" fill="#7a6a20"/>
<polygon points="380.6,576.8 394.1,576.2 394.1,578.2 380.6,579.1" fill="#e9da55" stroke="#000" stroke-width="1"/>
<polygon points="370.7,551.7 379.9,556.0 379.9,578.7 370.7,572.3" fill="#8b5a2b" stroke="#000" stroke-width="1"/>
<polygon points="379.9,556.0 381.7,556.4 381.7,576.8 379.9,578.7" fill="#ba8545"/>
<polygon points="408.3,586.5 427.4,589.3 428.8,594.3 408.3,595.7" fill="#7a6a20"/>
<polygon points="408.3,595.2 428.8,593.8 428.8,596.1 408.3,597.5" fill="#e9da55" stroke="#000" stroke-width="1"/>
<polygon points="394.5,564.5 407.6,570.1 407.6,596.4 394.5,588.6" fill="#8b5a2b" stroke="#000" stroke-width="1"/>
<polygon points="407.6,570.1 409.0,570.6 409.0,595.7 407.6,596.4" fill="#ba8545"/>
<polyline points="389.8,490.0 389.8,580.8" fill="none" stroke="#000" stroke-width="2"/>
<polygon points="389.6,595.0 389.6,604.2 527.8,711.0 530.0,711.0 530.0,595.0" fill="#7d9813"/>
<polygon points="452.3,608.5 530.0,650.9 530.0,711.0 527.8,711.0 452.3,653.0" fill="url(#gW)"/>
<polyline points="452.3,608.5 530.0,650.9" fill="none" stroke="#000" stroke-width="1"/>
<polyline points="399.1,595.0 399.1,611.7" fill="none" stroke="#000" stroke-width="1"/>
<polyline points="416.6,595.0 416.6,625.2" fill="none" stroke="#000" stroke-width="1"/>
<polyline points="429.3,595.0 429.3,634.7" fill="none" stroke="#000" stroke-width="1"/>
<polyline points="452.3,595.0 452.3,653.0" fill="none" stroke="#000" stroke-width="1"/>
<polyline points="518.2,595.0 518.2,645.8" fill="none" stroke="#000" stroke-width="1"/>
<polyline points="529.4,595.0 529.4,711.0" fill="none" stroke="#000" stroke-width="1"/>
<polygon points="403.1,595.0 428.5,595.0 428.5,596.6 409.4,597.5" fill="#e9da55" stroke="#000" stroke-width="1"/>
<polygon points="438.0,595.0 448.3,595.0 448.3,604.8 438.0,599.0" fill="#3c5d67" stroke="#000" stroke-width="1"/>
<polygon points="438.0,598.5 448.3,604.2 448.3,605.5 438.0,599.8" fill="#8fd6ea"/>
<polygon points="472.2,595.0 488.9,595.0 488.9,627.6 472.2,618.8" fill="#9dbc1a" stroke="#000" stroke-width="1"/>
<polygon points="474.9,605.3 488.1,605.3 488.1,625.5 474.9,617.6" fill="#3c5d67"/>
<polygon points="473.0,617.2 488.1,625.5 488.1,627.4 473.0,619.1" fill="#8fd6ea"/>
<polyline points="474.6,595.0 474.6,618.0" fill="none" stroke="#000" stroke-width="1"/>
<polygon points="340.7,621.7 447.4,740.4 447.4,808.4 342.0,655.0" fill="#1f4a27"/>
<polygon points="342.0,654.2 447.4,807.9 447.4,819.1 342.0,661.7" fill="#2f8d4e"/>
<polyline points="342.0,661.7 447.4,819.1" fill="none" stroke="#000" stroke-width="1"/>
<polyline points="342.0,655.0 447.4,808.4" fill="none" stroke="#143a1c" stroke-width="1"/>
<polygon points="341.2,624.3 349.2,625.7 349.2,652.4 341.2,649.7" fill="#8a4bff"/>
<polygon points="358.8,643.0 365.2,644.6 365.2,650.5 358.8,649.4" fill="#8a4bff"/>
<polygon points="348.7,623.8 358.8,635.0 358.8,671.8 348.7,675.0" fill="#ececec" stroke="#999" stroke-width="1"/>
<polygon points="364.7,640.9 376.7,652.4 376.7,695.1 364.7,698.5" fill="#ececec" stroke="#999" stroke-width="1"/>
<polygon points="394.0,674.5 408.7,687.0 408.7,739.1 394.0,743.3" fill="#ececec" stroke="#999" stroke-width="1"/>
<polygon points="337.5,610.5 441.5,723.6 444.7,741.2 337.5,621.7" fill="#c9c9c9"/>
<polygon points="337.5,609.7 342.0,607.8 445.3,720.9 441.5,723.6" fill="#7e7e7e"/>
<polyline points="337.5,621.7 337.5,609.7" fill="none" stroke="#888" stroke-width="1"/>
<polygon points="342.0,607.8 390.0,604.3 527.4,710.3 444.7,722.0" fill="#33268a" stroke="#777" stroke-width="1"/>
<polygon points="444.7,722.5 560.0,706.5 560.0,725.7 514.1,731.6 447.4,741.2" fill="#ececec"/>
<polygon points="448.7,741.2 514.1,732.1 514.1,799.1 448.7,811.6" fill="#8a4bff"/>
<polyline points="448.7,741.2 448.7,811.6" fill="none" stroke="#000" stroke-width="1"/>
<polygon points="514.1,713.7 550.1,709.7 550.1,793.8 514.1,799.1" fill="#ececec" stroke="#aaa" stroke-width="1"/>
<polyline points="514.1,731.6 550.1,727.1" fill="none" stroke="#aaa" stroke-width="1"/>
<polyline points="532.0,711.6 532.0,729.7" fill="none" stroke="#aaa" stroke-width="1"/>
<polygon points="448.7,811.6 514.1,799.1 550.1,793.8 560.0,791.9 560.0,799.4 447.4,819.1" fill="#3fa45d"/>
<polyline points="447.4,819.1 560.0,799.4" fill="none" stroke="#000" stroke-width="1"/>
<polyline points="448.7,811.6 514.1,799.1" fill="none" stroke="#000" stroke-width="1"/>
<polyline points="447.4,808.4 447.4,819.1" fill="none" stroke="#000" stroke-width="1"/>
<polyline points="514.1,799.1 514.1,805.8" fill="none" stroke="#000" stroke-width="1"/>
<polyline points="530.1,797.0 530.1,803.9" fill="none" stroke="#000" stroke-width="1"/>
<polygon points="540.0,710.9 857.3,662.7 857.8,679.1 843.1,679.6 698.9,702.8 678.1,706.5 551.0,726.5 540.0,728.0" fill="#ececec"/>
<polygon points="549.8,726.0 673.2,707.2 673.2,759.8 549.8,784.2" fill="#1f4a27"/>
<polyline points="613.3,717.7 673.2,753.7" fill="none" stroke="#000" stroke-width="1"/>
<polygon points="673.2,707.2 679.3,706.0 679.3,759.8 673.2,757.3" fill="#7e7e7e"/>
<polygon points="551.0,782.3 678.1,758.5 679.3,767.6 698.9,760.3 843.1,730.9 854.1,730.4 854.1,734.8 551.0,798.4" fill="#3fa45d"/>
<polyline points="551.0,782.3 678.1,758.5" fill="none" stroke="#000" stroke-width="1"/>
<polyline points="551.0,798.4 854.1,734.8 854.1,730.9" fill="none" stroke="#000" stroke-width="1"/>
<polygon points="698.9,702.3 843.1,679.1 843.1,730.9 698.9,760.3" fill="#8a4bff"/>
<polyline points="698.9,760.3 843.1,730.9" fill="none" stroke="#000" stroke-width="1"/>
<polygon points="679.3,690.1 698.9,688.2 698.9,760.3 679.3,767.6" fill="#ececec" stroke="#aaa" stroke-width="1"/>
<polyline points="679.3,704.0 698.9,701.1" fill="none" stroke="#aaa" stroke-width="1"/>
<polygon points="843.1,664.4 857.8,662.5 857.8,729.2 843.1,731.7" fill="#ececec" stroke="#aaa" stroke-width="1"/>
<polyline points="843.1,678.6 857.8,676.7" fill="none" stroke="#aaa" stroke-width="1"/>
<polyline points="540.0,710.9 857.3,662.7" fill="none" stroke="#aaa" stroke-width="1"/>
<polyline points="602.3,701.1 602.3,717.7" fill="none" stroke="#aaa" stroke-width="1"/>
<polyline points="738.5,680.3 738.5,695.0" fill="none" stroke="#aaa" stroke-width="1"/>
<polyline points="600.6,654.7 600.6,701.1" fill="none" stroke="#000" stroke-width="1"/>
<polyline points="679.3,640.0 679.3,688.9" fill="none" stroke="#000" stroke-width="1"/>
<polyline points="736.8,640.0 736.8,680.3" fill="none" stroke="#000" stroke-width="1"/>
<polygon points="490.0,575.1 517.8,577.2 517.8,644.2 490.0,629.9" fill="#6f8a12"/>
<polygon points="519.4,576.7 528.1,575.9 528.1,650.5 519.4,645.0" fill="#8eae14"/>
<polygon points="490.0,629.9 528.9,651.3 528.9,700.0 510.7,700.0 490.0,682.3" fill="#6f8a12"/>
<polyline points="490.0,629.9 528.9,651.3" fill="none" stroke="#000" stroke-width="1"/>
<polyline points="518.6,576.7 518.6,645.0" fill="none" stroke="#000" stroke-width="1"/>
<polygon points="490.0,560.0 498.7,560.0 498.7,575.9 490.0,571.1" fill="#7a6a20"/>
<polygon points="490.0,570.8 499.5,575.6 499.5,577.5 490.0,573.0" fill="#e9da55"/>
<polygon points="532.6,579.9 582.1,577.5 582.1,616.4 544.8,621.2 544.8,642.6 532.6,642.6" fill="#9dbc1a" stroke="#000" stroke-width="1"/>
<polygon points="575.8,578.3 580.9,577.8 580.9,597.5 575.8,597.8" fill="#5f2d5b"/>
<polygon points="532.9,601.3 580.5,597.8 580.5,616.4 544.8,621.2 544.8,641.8 532.9,641.8" fill="#3c5d67"/>
<polyline points="532.9,601.3 580.5,597.8" fill="none" stroke="#000" stroke-width="1"/>
<polygon points="587.7,573.5 596.8,572.7 596.8,614.8 587.7,616.4" fill="#6f8a12"/>
<polygon points="558.3,572.7 598.8,570.3 598.8,572.4 558.3,574.6" fill="#8fd6ea"/>
<polyline points="499.5,575.9 558.3,573.5" fill="none" stroke="#000" stroke-width="1"/>
<polyline points="599.6,570.3 679.0,564.8" fill="none" stroke="#000" stroke-width="1"/>
<polyline points="599.6,570.3 599.6,615.6" fill="none" stroke="#000" stroke-width="1"/>
<polyline points="599.6,655.3 599.6,700.0" fill="none" stroke="#000" stroke-width="1"/>
<polyline points="528.9,575.1 528.9,700.0" fill="none" stroke="#000" stroke-width="1"/>
<polyline points="531.6,575.1 531.6,700.0" fill="none" stroke="#000" stroke-width="1"/>
<polyline points="679.0,564.8 679.0,687.1" fill="none" stroke="#000" stroke-width="1"/>
<polyline points="617.1,642.3 679.0,634.7 690.0,633.4" fill="none" stroke="#000" stroke-width="1"/>
<polygon points="611.5,580.7 645.4,578.6 645.4,617.2 626.6,618.8 611.5,613.2" fill="#5f2d5b" stroke="#000" stroke-width="1"/>
<polygon points="611.8,613.2 626.6,618.5 642.5,617.2 617.1,612.4" fill="#3c5d67"/>
<polygon points="643.3,578.7 645.2,578.6 645.2,617.2 643.3,617.3" fill="#6f8a12"/>
<polygon points="532.9,642.6 544.8,643.4 544.8,660.1 531.0,651.3" fill="#7a6a20"/>
<polygon points="530.5,650.5 544.8,659.3 544.8,661.7 530.5,652.6" fill="#e9da55" stroke="#000" stroke-width="1"/>
<polyline points="349.8,616.5 400.5,612.4" fill="none" stroke="#6e66b8" stroke-width="1"/>
<polyline points="350.2,614.5 396.3,610.9" fill="none" stroke="#e8e6f8" stroke-dasharray="2 4" stroke-width="1"/>
<polyline points="357.2,624.6 410.3,620.0" fill="none" stroke="#6e66b8" stroke-width="1"/>
<polyline points="357.6,622.6 406.0,618.4" fill="none" stroke="#e8e6f8" stroke-dasharray="2 4" stroke-width="1"/>
<polyline points="364.3,632.6 419.8,627.3" fill="none" stroke="#6e66b8" stroke-width="1"/>
<polyline points="364.8,630.5 415.4,625.8" fill="none" stroke="#e8e6f8" stroke-dasharray="2 4" stroke-width="1"/>
<polyline points="371.3,640.3 429.2,634.5" fill="none" stroke="#6e66b8" stroke-width="1"/>
<polyline points="371.9,638.3 424.7,633.0" fill="none" stroke="#e8e6f8" stroke-dasharray="2 4" stroke-width="1"/>
<polyline points="378.2,648.0 438.4,641.6" fill="none" stroke="#6e66b8" stroke-width="1"/>
<polyline points="378.9,645.9 433.8,640.2" fill="none" stroke="#e8e6f8" stroke-dasharray="2 4" stroke-width="1"/>
<polyline points="385.0,655.6 447.6,648.7" fill="none" stroke="#6e66b8" stroke-width="1"/>
<polyline points="385.9,653.5 442.9,647.3" fill="none" stroke="#e8e6f8" stroke-dasharray="2 4" stroke-width="1"/>
<polyline points="391.8,663.2 456.6,655.7" fill="none" stroke="#6e66b8" stroke-width="1"/>
<polyline points="392.7,661.0 451.9,654.3" fill="none" stroke="#e8e6f8" stroke-dasharray="2 4" stroke-width="1"/>
<polyline points="398.5,670.7 465.7,662.6" fill="none" stroke="#6e66b8" stroke-width="1"/>
<polyline points="399.6,668.5 460.8,661.3" fill="none" stroke="#e8e6f8" stroke-dasharray="2 4" stroke-width="1"/>
<polyline points="405.2,678.1 474.6,669.5" fill="none" stroke="#6e66b8" stroke-width="1"/>
<polyline points="406.3,675.9 469.7,668.2" fill="none" stroke="#e8e6f8" stroke-dasharray="2 4" stroke-width="1"/>
<polyline points="411.9,685.5 483.5,676.4" fill="none" stroke="#6e66b8" stroke-width="1"/>
<polyline points="413.1,683.3 478.5,675.1" fill="none" stroke="#e8e6f8" stroke-dasharray="2 4" stroke-width="1"/>
<polyline points="418.5,692.9 492.4,683.2" fill="none" stroke="#6e66b8" stroke-width="1"/>
<polyline points="419.8,690.7 487.2,681.9" fill="none" stroke="#e8e6f8" stroke-dasharray="2 4" stroke-width="1"/>
<polyline points="425.1,700.2 501.2,690.0" fill="none" stroke="#6e66b8" stroke-width="1"/>
<polyline points="426.5,698.0 496.0,688.7" fill="none" stroke="#e8e6f8" stroke-dasharray="2 4" stroke-width="1"/>
<polyline points="431.7,707.5 510.0,696.8" fill="none" stroke="#6e66b8" stroke-width="1"/>
<polyline points="433.1,705.2 504.7,695.5" fill="none" stroke="#e8e6f8" stroke-dasharray="2 4" stroke-width="1"/>
<polyline points="438.2,714.8 518.7,703.5" fill="none" stroke="#6e66b8" stroke-width="1"/>
<polyline points="439.8,712.5 513.3,702.3" fill="none" stroke="#e8e6f8" stroke-dasharray="2 4" stroke-width="1"/>
<polyline points="347.8,607.4 454.7,720.6" fill="none" stroke="#6a62b4" stroke-width="1"/>
<polyline points="384.3,604.8 517.5,711.7" fill="none" stroke="#6a62b4" stroke-width="1"/>
<polygon points="528.5,189.3 531.5,189.8 531.5,418.5 528.5,418.5" fill="#a6bb30" stroke="#000" stroke-width="1"/>
<polyline points="501.0,418.0 501.0,576.0" fill="none" stroke="#000" stroke-width="2"/>
<polyline points="529.6,189.3 762.0,229.6" fill="none" stroke="#000" stroke-width="2"/>
<polyline points="529.6,265.9 600.0,274.8 763.7,291.0" fill="none" stroke="#000" stroke-width="1"/>
<polyline points="529.6,343.7 617.0,350.3" fill="none" stroke="#000" stroke-width="1"/>
<polyline points="680.0,357.0 764.0,361.5" fill="none" stroke="#000" stroke-width="1"/>
<polyline points="501.0,418.0 600.0,421.3 853.0,430.2" fill="none" stroke="#000" stroke-width="1"/>
<polyline points="501.0,496.0 600.0,495.0 853.0,492.0" fill="none" stroke="#000" stroke-width="1"/>
<polyline points="501.0,575.4 528.6,577.0" fill="none" stroke="#000" stroke-width="1"/>
<polyline points="853.3,366.0 853.3,663.0" fill="none" stroke="#000" stroke-width="1"/>
<polyline points="565.6,345.0 565.6,420.0" fill="none" stroke="#000" stroke-width="1"/>
<polyline points="531.2,418.8 531.2,496.0" fill="none" stroke="#000" stroke-width="1"/>
<polyline points="558.0,420.0 558.0,567.0" fill="none" stroke="#000" stroke-width="1"/>
<polygon points="632.3,308.8 696.3,314.8 696.3,349.8 632.3,345.0" fill="#ba8545" stroke="#000" stroke-width="1"/>
<polygon points="695.3,387.9 755.7,391.1 755.7,424.5 695.3,421.3" fill="#ba8545" stroke="#000" stroke-width="1"/>
<polygon points="826.3,527.8 875.8,525.5 875.8,556.4 826.3,559.6" fill="#ba8545" stroke="#000" stroke-width="1"/>
<polygon points="695.3,604.0 755.7,600.2 755.7,637.4 695.3,642.2" fill="#ba8545" stroke="#000" stroke-width="1"/>
<polygon points="544.8,621.2 616.3,614.8 616.3,652.1 544.8,660.4" fill="#ba8545" stroke="#000" stroke-width="1"/>
<polygon points="544.8,660.4 616.3,652.1 616.3,653.7 544.8,662.0" fill="#e9da55"/>
<polyline points="472.6,177.2 507.9,138.0 645.8,166.3 676.8,145.2 764.0,165.0" fill="none" stroke="#000" stroke-width="2"/>
<polyline points="765.0,191.0 814.4,201.5 814.4,236.0" fill="none" stroke="#000" stroke-width="1.6"/>
<polyline points="409.7,220.0 430.5,193.4 472.0,199.6" fill="none" stroke="#000" stroke-width="1.6"/>
<polyline points="472.6,177.0 472.6,300.0" fill="none" stroke="#000" stroke-width="1.6"/>
<polyline points="764.3,165.0 764.3,229.0" fill="none" stroke="#000" stroke-width="1.6"/>
<polyline points="873.2,239.5 873.6,366.0" fill="none" stroke="#000" stroke-width="1.6"/>
</svg>
<div id="vscroll" class="abs"></div>
<div id="hscroll" class="abs"></div>
<div id="status" class="abs"></div>

<!-- Norma panel -->
<div class="pnl dv" id="norma" style="left:36px;top:117px;width:142px;height:36px;background:#f3f5fb">
<div class="bar" style="left:3px;top:3px;width:136px;height:13px"></div>
<div class="xb" style="left:125px;top:3px;width:14px;height:13px"><svg width="12" height="11" viewBox="0 0 12 11"><path d="M2.5 2 L9.5 9 M9.5 2 L2.5 9" stroke="#111" stroke-width="1.8" fill="none"/></svg></div>
<span style="position:absolute;left:7px;top:19px;font-size:11px;color:#1c1c24;letter-spacing:0.2px">Norma</span>
<span style="position:absolute;left:54px;top:22px;width:16px;height:5px;background:#fff"></span>
<span style="position:absolute;left:54px;top:27px;width:16px;height:6px;background:#e0123c;border-radius:0 0 1px 1px"></span>
<span style="position:absolute;left:73px;top:19px;font-size:11px;color:#161660;letter-spacing:0.2px">Eurokod-PL</span>
</div>
<!-- Legend panel -->
<div class="pnl dv" id="leg" style="left:1043px;top:175px;width:82px;height:205px;background:#fafafa">
<div class="bar" style="left:3px;top:3px;width:77px;height:14px"></div>
<div class="xb" style="left:64px;top:3px;width:14px;height:13px"><svg width="13" height="12" viewBox="0 0 13 12"><path d="M3 2.5 L10 9.5 M10 2.5 L3 9.5" stroke="#111" stroke-width="1.8" fill="none"/></svg></div>
<div class="hd">Grubość</div>
<div class="r" style="top:35px"><i style="background:#3e9c5c"></i><span>600 mm</span></div>
<div class="r" style="top:52px"><i style="background:#b8f46c"></i><span>400 mm</span></div>
<div class="r" style="top:69px"><i style="background:#2f5b33"></i><span>250 mm</span></div>
<div class="r" style="top:86px"><i style="background:#82d0ea"></i><span>220 mm</span></div>
<div class="r" style="top:103px"><i style="background:#7d46f6"></i><span>200 mm</span></div>
<div class="r" style="top:120px"><i style="background:#869d10"></i><span>180 mm</span></div>
<div class="r" style="top:137px"><i style="background:#ffe23c"></i><span>170 mm</span></div>
<div class="r" style="top:154px"><i style="background:#7b3f6f"></i><span>160 mm</span></div>
<div class="r" style="top:171px"><i style="background:#2a2aa2"></i><span>140 mm</span></div>
<div class="r" style="top:188px"><i style="background:#ae7b3d"></i><span>120 mm</span></div>
</div>
<!-- Coordinates panel -->
<div class="pnl dv" id="crd" style="left:1083px;top:771px;width:286px;height:66px;background:#ececec">
<div class="xb" style="left:4px;top:4px;width:13px;height:13px"><svg width="11" height="11" viewBox="0 0 11 11"><path d="M2 2 L9 9 M9 2 L2 9" stroke="#111" stroke-width="1.8" fill="none"/></svg></div>
<div class="bar" style="left:4px;top:17px;width:13px;height:45px"></div>
<div class="d" style="left:22px;top:4px;width:16px;height:57px">d</div>
<span class="lb" style="left:41px;top:4px">dX[m] :</span><span class="vb" style="left:91px;top:4px;width:59px">266,039</span>
<span class="lb" style="left:41px;top:19px">dY[m] :</span><span class="vb" style="left:91px;top:19px;width:59px">27,221</span>
<span class="lb" style="left:41px;top:34px">dZ[m] :</span><span class="vb" style="left:91px;top:34px;width:59px">7,413</span>
<span class="lb" style="left:41px;top:49px">dL[m] :</span><span class="vb" style="left:91px;top:49px;width:59px">267,530</span>
<div style="position:absolute;left:152px;top:3px;width:1px;height:60px;background:#8f8f8f"></div>
<div style="position:absolute;left:153px;top:3px;width:1px;height:60px;background:#fff"></div>
<div class="d" style="left:156px;top:4px;width:16px;height:57px">d</div>
<span class="lb" style="left:175px;top:4px">d r[m] :</span><span class="vb" style="left:226px;top:4px;width:57px">267,530</span>
<span class="lb" style="left:175px;top:19px">d&nbsp; a[°] :</span><span class="vb" style="left:226px;top:19px;width:57px">5,84</span>
<span class="lb" style="left:175px;top:34px">d h[m] :</span><span class="vb" style="left:226px;top:34px;width:57px">7,413</span>
</div>
<!-- vscroll items -->
<svg class="abs" style="left:1371px;top:115px;z-index:5" width="18" height="722" viewBox="0 0 18 722">
<path d="M4 6 L12 14 M12 6 L4 14" stroke="#6a6a6a" stroke-width="1.2" fill="none"/>
<rect x="4.5" y="25.5" width="8" height="8" fill="#f0f0f0" stroke="#7a7a7a"/><rect x="4" y="25" width="9" height="2" fill="#7a7a7a"/>
<path d="M5 56.5 L8.5 53 L12 56.5" stroke="#505050" stroke-width="1.8" fill="none"/>
<rect x="1" y="60" width="15" height="17" fill="#cdcdcd"/>
<path d="M5 711.500 L8.5 715 L12 711.500" stroke="#505050" stroke-width="1.800" fill="none"/>
</svg>
<svg id="ico" class="abs" style="left:0;top:0;z-index:10" width="1391" height="881" viewBox="0 0 1391 881">
<defs><filter id="blr" x="-5%" y="-50%" width="110%" height="200%"><feGaussianBlur stdDeviation="2.5"/></filter></defs>
<g transform="translate(11,58)"><path d="M0.8 0.8 H8.5 L13.2 5.5 V17 H0.8 Z" fill="#fff" stroke="#000" stroke-width="1.6"/><path d="M8.5 0.8 V5.5 H13.2" fill="none" stroke="#000" stroke-width="1.2"/></g>
<g transform="translate(40,59)"><path d="M0.5 16 V6.5 L2.5 4.5 H7 L9 6.5 H13 V9 " fill="#f4ee2a" stroke="#000" stroke-width="1"/><path d="M0.5 16 L6 9 H19.5 L14 16 Z" fill="#8d8d28" stroke="#000" stroke-width="1"/><path d="M11 2.5 C13.5 0.5 16.5 1 18 4" fill="none" stroke="#000" stroke-width="1.3"/><path d="M15.5 6 L20 6.5 L19.5 2 Z" fill="#000"/></g>
<g transform="translate(73,59)"><rect x="0.7" y="0.7" width="15.8" height="15.8" rx="1" fill="#8b8b2c" stroke="#000" stroke-width="1.4"/><rect x="3.2" y="1.4" width="10.3" height="8" fill="#fff"/><rect x="4.5" y="11" width="8" height="5.5" fill="#000"/><rect x="5.3" y="12.2" width="2" height="3.5" fill="#fff"/><rect x="14" y="1.8" width="1.3" height="1.3" fill="#fff"/></g>
<g transform="translate(103,56)"><rect x="5" y="0.5" width="12.5" height="8" fill="#fff" stroke="#9a9a9a" stroke-width="0.8"/><rect x="1" y="7.5" width="20" height="10" rx="2.5" fill="#d2cdb8" stroke="#555" stroke-width="1"/><rect x="1.5" y="11.5" width="19" height="2.5" fill="#222"/><rect x="4.5" y="13.5" width="13.5" height="8" fill="#fff" stroke="#999" stroke-width="0.8"/><path d="M7 16.5 H15.5 M7 18.8 H15.5" stroke="#999" stroke-width="0.9"/></g>
<rect x="132" y="54" width="1" height="26" fill="#8e9aa8"/>
<g transform="translate(141,56)"><path d="M0.5 6 L4.5 1 V16 L17 16 L13.5 19.5 H0.5 Z" fill="#f2f2f2" stroke="#444" stroke-width="0.9"/><rect x="4.2" y="0.8" width="16" height="15" fill="#d3141b" stroke="#f08a8a" stroke-width="0.6"/><path d="M7 14 C10 11 11.5 7 11.8 3.2 C12.2 7 14.5 10.5 18.5 11.5 C14 10 9.5 11.5 7 14 Z" fill="none" stroke="#fff" stroke-width="1.1"/></g>
<g transform="translate(178,63)"><path d="M3.5 4 C6 0.8 11.5 1.5 11.5 5.5 C11.5 7.3 10.5 8 9.5 8" fill="none" stroke="#1832c4" stroke-width="1.5"/><path d="M0.2 1.5 V7.5 H6.2 Z" fill="#1832c4"/></g>
<path d="M201.6 66 H209.2 L205.4 70.2 Z" fill="#000"/>
<g transform="translate(220,63)"><path d="M10 4 C7.5 0.8 2 1.5 2 5.5 C2 7.3 3 8 4 8" fill="none" stroke="#b5bcc6" stroke-width="1.5"/><path d="M13.3 1.5 V7.5 H7.3 Z" fill="#b5bcc6"/></g>
<path d="M247.6 66 H255.2 L251.4 70.2 Z" fill="#a8b0ba"/>
<g transform="translate(8,91)"><path d="M0.8 10.5 L7.5 5.5 H20 L13.5 10.5 Z" fill="#fff" stroke="#000" stroke-width="1.2"/><path d="M0.8 13.5 L13.5 13.5 L20 8.5" fill="none" stroke="#000" stroke-width="1.6"/><path d="M0.8 7.5 L7.5 2.5 H20 L13.5 7.5 Z" fill="#fff" stroke="#000" stroke-width="1.2"/><path d="M0.8 4.8 L7.5 0.8 H20 L13.5 4.8 Z" fill="#fff" stroke="#000" stroke-width="1.2"/></g>
<text x="50" y="94.5" font-family="Liberation Serif,serif" font-weight="bold" font-size="8.5" text-anchor="middle" fill="#000">±0.00</text>
<g transform="translate(40,94)"><rect x="0" y="0.8" width="20" height="1.1" fill="#0000e0"/><path d="M0.5 1.8 H14.5 L7.5 8.6 Z" fill="#0000e0"/><path d="M10.3 2.6 H13 L9 6.2 Z" fill="#fff"/><rect x="0" y="9.2" width="18.5" height="2.8" fill="#000"/><path d="M1 10.6 h1 m1 0 h1 m1 0 h1 m1 0 h1 m1 0 h1 m1 0 h1 m1 0 h1 m1 0 h1 m1 0 h1" stroke="#dfe8f2" stroke-width="1"/></g>
<rect x="68" y="85" width="1" height="26" fill="#8e9aa8"/>
<g transform="translate(80,88)"><rect x="0" y="0" width="19" height="18.5" fill="#fff" stroke="#8a8a8a" stroke-width="0.8"/><rect x="0.5" y="0.5" width="18" height="5" fill="#8c8c8c"/><rect x="0.5" y="6" width="5.5" height="12" fill="#c9cc2a"/><rect x="6.0" y="0.5" width="1" height="17.5" fill="#8f959b"/><rect x="10.700000000000001" y="0.5" width="1" height="17.5" fill="#8f959b"/><rect x="15.400000000000002" y="0.5" width="1" height="17.5" fill="#8f959b"/><rect x="0.5" y="5.5" width="18" height="1" fill="#8f959b"/><rect x="0.5" y="8.7" width="18" height="1" fill="#8f959b"/><rect x="0.5" y="11.9" width="18" height="1" fill="#8f959b"/><rect x="0.5" y="15.100000000000001" width="18" height="1" fill="#8f959b"/></g>
<g transform="translate(112,88)"><rect x="3" y="0.7" width="16.5" height="18.8" rx="1.5" fill="#e1e5ea" stroke="#444" stroke-width="1"/><rect x="8" y="3" width="5" height="1.2" fill="#111"/><rect x="8" y="5.5" width="9" height="1.2" fill="#111"/><rect x="8" y="8" width="9" height="1.2" fill="#111"/><rect x="8" y="10.5" width="9" height="1.2" fill="#111"/><rect x="8" y="13" width="9" height="1.2" fill="#111"/><rect x="8" y="15.5" width="9" height="1.2" fill="#111"/><rect x="8" y="17.5" width="9" height="1.2" fill="#111"/><circle cx="2.6" cy="4.5" r="1.6" fill="#fff" stroke="#111" stroke-width="0.9"/><circle cx="2.6" cy="9.8" r="1.6" fill="#fff" stroke="#111" stroke-width="0.9"/><circle cx="2.6" cy="15" r="1.6" fill="#fff" stroke="#111" stroke-width="0.9"/></g>
<rect x="140" y="85" width="1" height="26" fill="#8e9aa8"/>
<g transform="translate(148,87)"><path d="M1 13 L11.5 1 L21.5 6.5 L21.5 11 L11 20.5 L1 16 Z" fill="#b9c0c9" stroke="#000" stroke-width="1.1"/><path d="M1 13 L11.5 1 L21.5 6.5 L11 17.5 Z" fill="#c9cdf2" stroke="#000" stroke-width="1"/><path d="M8 9 L12.5 3.8 L18 7 L13.5 12.2 Z" fill="#fff" stroke="#14149a" stroke-width="1"/><path d="M12 4.2 L17.8 7.4" stroke="#14149a" stroke-width="2"/><path d="M11 17.5 L11 20.5" stroke="#000" stroke-width="1"/></g>
<path d="M177.8 97 H185.4 L181.6 101.2 Z" fill="#000"/>
<g transform="translate(194,89)"><rect x="0.8" y="0.8" width="18.4" height="13.4" fill="#cfd4f3" stroke="#14148c" stroke-width="1.6"/><rect x="0.8" y="0.4" width="18.4" height="2.2" fill="#14148c"/><rect x="4" y="4.5" width="5" height="3.4" fill="#aab0b8"/><rect x="10.2" y="4.5" width="5" height="3.4" fill="#aab0b8"/><rect x="4" y="9" width="5" height="3.4" fill="#aab0b8"/><rect x="9" y="10" width="11.5" height="8" rx="1" fill="#fff" stroke="#000" stroke-width="1.3"/><rect x="14" y="8.6" width="5" height="2" fill="#000"/><circle cx="14.8" cy="14" r="2.2" fill="#fff" stroke="#000" stroke-width="1.5"/></g>
<rect x="275" y="90" width="5" height="5" fill="#000"/>
<rect x="295" y="81" width="1" height="24" fill="#7f8893"/>
<path d="M313.2 100.7 L329 85" stroke="#000" fill="none" stroke-width="1.1"/>
<path d="M340.2 101.5 L347.7 94.2 H358.4 V85.2" stroke="#000" fill="none" stroke-width="1.1"/>
<rect x="370.5" y="87.5" width="17" height="11" stroke="#000" fill="none" stroke-width="1.2"/>
<path d="M397.2 91 L401.8 82.3 L419 90.4 L413.8 99.6 Z" stroke="#000" fill="none" stroke-width="1.1"/><path d="M397.2 100.4 H413.8 M397.5 100.2 L400 94.5" stroke="#1414d0" fill="none" stroke-width="1"/><path d="M401.5 97 l1 1.5 l1 -1.5" stroke="#1414d0" fill="none" stroke-width="0.9"/>
<polygon points="432.4,84.5 442.2,84.5 447.1,93.0 442.2,101.5 432.4,101.5 427.5,93.0" fill="none" stroke="#777" stroke-width="1" stroke-dasharray="1 1.6"/>
<path d="M432.4 84.5 L442.2 84.5 L447.1 93.0" stroke="#000" fill="none" stroke-width="1.2"/>
<path d="M437.3 93 H447" stroke="#777" stroke-dasharray="1 1.6" fill="none"/>
<rect x="431.2" y="83.3" width="2.4" height="2.4" fill="#1414d0"/>
<rect x="436.1" y="91.8" width="2.4" height="2.4" fill="#1414d0"/>
<rect x="445.9" y="91.8" width="2.4" height="2.4" fill="#1414d0"/>
<polygon points="461.1,84.5 470.9,84.5 475.8,93.0 470.9,101.5 461.1,101.5 456.2,93.0" fill="none" stroke="#777" stroke-width="1" stroke-dasharray="1 1.6"/>
<path d="M456.2 93.0 L461.1 84.5 L470.9 84.5 L475.8 93.0" stroke="#000" fill="none" stroke-width="1.2"/>
<rect x="469.7" y="83.3" width="2.4" height="2.4" fill="#1414d0"/>
<path d="M454.7 93.0 l3 -2.2 v4.4 Z" fill="#1414d0"/>
<path d="M477.3 93.0 l-3 -2.2 v4.4 Z" fill="#1414d0"/>
<rect x="483" y="81" width="1" height="24" fill="#7f8893"/>
<circle cx="509.1" cy="93" r="9.6" fill="none" stroke="#666" stroke-dasharray="2 1.6"/>
<path d="M501 87.6 A9.6 9.6 0 0 1 517.8 90.3" stroke="#000" fill="none" stroke-width="1.3"/>
<path d="M501 87.6 L509.1 93 L517.8 90.3" stroke="#666" stroke-dasharray="2 1.4" fill="none"/>
<rect x="499.8" y="86.4" width="2.4" height="2.4" fill="#1414d0"/>
<rect x="507.9" y="91.8" width="2.4" height="2.4" fill="#1414d0"/>
<rect x="516.6" y="89.1" width="2.4" height="2.4" fill="#1414d0"/>
<circle cx="537.9" cy="93" r="9.6" fill="none" stroke="#666" stroke-dasharray="2 1.6"/>
<path d="M529.8 87.6 A9.6 9.6 0 0 1 543.1 84.8 A9.6 9.6 0 0 1 543.8 100.5" stroke="#000" fill="none" stroke-width="1.3"/>
<rect x="528.6" y="86.4" width="2.4" height="2.4" fill="#1414d0"/>
<rect x="541.9" y="83.6" width="2.4" height="2.4" fill="#1414d0"/>
<rect x="542.6" y="99.0" width="2.4" height="2.4" fill="#1414d0"/>
<rect x="555" y="81" width="1" height="24" fill="#7f8893"/>
<g transform="translate(560,76)"><path d="M10 17.3 H32" stroke="#000" fill="none" stroke-width="1.4"/><path d="M15.5 8 V27 M20.7 27 L29.7 8" stroke="#000" fill="none" stroke-dasharray="1.2 1.2" stroke-width="1.1"/><rect x="14" y="15.8" width="3" height="3" fill="#000"/><rect x="24" y="15.8" width="3" height="3" fill="#000"/></g>
<g transform="translate(560,76)"><path d="M49.5 6.3 V27.6" stroke="#000" fill="none" stroke-width="1.4"/><path d="M40 11.5 H59.5 M40 26.7 L59.3 17.2" stroke="#000" fill="none" stroke-dasharray="1.2 1.2" stroke-width="1.1"/><rect x="48" y="10" width="3" height="3" fill="#000"/><rect x="48" y="20" width="3" height="3" fill="#000"/></g>
<g transform="translate(560,76)"><path d="M71.3 24.4 L86.8 9.4" stroke="#000" fill="none" stroke-width="1.3"/><rect x="69.8" y="22.9" width="3" height="3" fill="#000"/><rect x="85.3" y="7.9" width="3" height="3" fill="#000"/><rect x="75.2" y="18.2" width="2.6" height="2.6" fill="#000"/><rect x="80.2" y="13.2" width="2.6" height="2.6" fill="#000"/></g>
<g transform="translate(560,76)"><path d="M100 9 L116 24.7 M116 9 L100 24.7" stroke="#000" fill="none" stroke-width="1.1"/><rect x="105.9" y="15" width="4" height="4" fill="#000"/></g>
<g transform="translate(560,76)"><path d="M129 9 L145 24.7 M145 9 L129 24.7" stroke="#000" fill="none" stroke-width="1.1"/><rect x="134.3" y="14.6" width="5" height="5" fill="#ffd0d8"/><rect x="135" y="15.2" width="3.8" height="3.8" fill="#d01030"/><path d="M138.7 14 V7.5" stroke="#d01030" stroke-width="1.2" stroke-dasharray="2 1"/><path d="M136.6 8.8 L138.7 5.8 L140.8 8.8 Z" fill="#d01030"/></g>
<g transform="translate(705,76)"><path d="M12 8 L30 26.5" stroke="#000" fill="none" stroke-width="1.2"/><rect x="10.7" y="6.7" width="2.6" height="2.6" fill="#000"/><rect x="28.7" y="25.2" width="2.6" height="2.6" fill="#000"/><circle cx="18" cy="14.2" r="1.2" fill="#e01020"/><circle cx="24" cy="20.3" r="1.2" fill="#e01020"/><path d="M18 14.2 L23.5 8.5 M24 20.3 L29.5 14.5" stroke="#e01020" stroke-width="1.1" stroke-dasharray="1.5 1"/><path d="M21.5 7.5 L25.5 6.2 L24.5 10.2 Z M27.5 13.5 L31.5 12.2 L30.5 16.2 Z" fill="#e01020"/></g>
<g transform="translate(705,76)"><path d="M39 16.5 H45" stroke="#000" fill="none" stroke-width="1.3"/><path d="M46 16.5 H56" stroke="#1890e0" stroke-width="1.2" stroke-dasharray="2 1.2"/><path d="M53.5 27.5 L60.3 6.3" stroke="#000" fill="none" stroke-width="1.3"/><path d="M52.5 12.5 L56.8 16.5 L52.5 20.5" stroke="#1414d0" fill="none" stroke-width="1.1"/></g>
<g transform="translate(705,76)"><path d="M68 16.5 H78" stroke="#000" fill="none" stroke-width="1.3"/><path d="M79 16.5 H90" stroke="#18a8e8" stroke-width="1.2" stroke-dasharray="2 1.2"/><path d="M74.5 27.5 L81.5 6.3" stroke="#000" fill="none" stroke-width="1.3"/><path d="M73.5 12.5 L82 20.5 M82 12.5 L73.5 20.5" stroke="#e01020" stroke-width="1"/></g>
<g transform="translate(705,76)"><path d="M97 13.5 H103.5" stroke="#000" fill="none" stroke-width="1.3"/><path d="M104.5 13.5 H111" stroke="#1890e0" stroke-width="1.2" stroke-dasharray="2 1.2"/><path d="M105.3 27.5 L111.5 16" stroke="#000" stroke-width="1.3" stroke-dasharray="3 1.2"/><rect x="111" y="12" width="3.4" height="3.4" fill="#1414e0"/><path d="M109.5 10.5 L116 17 M116 10.5 L109.5 17 M113.5 10.5 L116.5 6.5" stroke="#1414e0" stroke-width="0.8" stroke-dasharray="1.5 0.8"/></g>
<g transform="translate(705,76)"><path d="M126.3 9.2 L144.7 27.6 M126.3 20.7 L147.8 10.3" stroke="#000" fill="none" stroke-width="1.1"/><path d="M141.2 13.8 V23.6" stroke="#1890e0" stroke-width="1.2"/></g>
<g transform="translate(856,78)"><polygon points="4.3,16.4 11.2,12.9 20.7,22.4 14.2,25.5" fill="#b4b8ae"/><polygon points="4.3,21.1 4.3,16.4 14.2,25.5 8.6,25.5" fill="#a6aaa6"/><polygon points="11.2,12.9 11.2,6.5 20.7,14.9 20.7,22.4" fill="#a6aaa6"/><polygon points="11.2,6.5 16,4.1 25.9,13.8 20.7,14.9" fill="#b4b8ae"/><path d="M4.3 16.4 L11.2 12.9 V6.5 L16 4.1 L21 9 M8.6 25.5 L4.3 21.1 V16.4 L9.1 21.1 M11.2 12.9 L16 17.9 M11.2 6.5 L17 11.6" stroke="#000" fill="none" stroke-width="1.3"/><path d="M21 9 L25.9 13.8 V22.9 M20.7 14.9 V22.4 L14.2 25.5 H8.6 M9.1 21.1 L14.2 25.5 M16 17.9 L20.7 22.4 M17 11.6 L20.7 14.9 L25.9 13.8" stroke="#000" fill="none" stroke-width="1.3"/><path d="M8.6 25.5 L9.1 21.1 L16 17.9 L17 11.6 L21.1 8.9" stroke="#1a1ae0" stroke-width="1.5" fill="none"/><path d="M21.2 8.5 L21.6 4.5" stroke="#1a1ae0" stroke-width="1.2" stroke-dasharray="1 1.2"/></g>
<g transform="translate(885,78)"><polygon points="4.3,16.4 11.2,12.9 20.7,22.4 14.2,25.5" fill="#b4b8ae"/><polygon points="4.3,21.1 4.3,16.4 14.2,25.5 8.6,25.5" fill="#a6aaa6"/><polygon points="11.2,12.9 11.2,6.5 20.7,14.9 20.7,22.4" fill="#a6aaa6"/><polygon points="11.2,6.5 16,4.1 25.9,13.8 20.7,14.9" fill="#b4b8ae"/><path d="M4.3 16.4 L11.2 12.9 V6.5 L16 4.1 L21 9 M8.6 25.5 L4.3 21.1 V16.4 L9.1 21.1 M11.2 12.9 L16 17.9 M11.2 6.5 L17 11.6" stroke="#000" fill="none" stroke-width="1.3"/><path d="M21 9 L25.9 13.8 V22.9 M20.7 14.9 V22.4 L14.2 25.5 H8.6 M9.1 21.1 L14.2 25.5 M16 17.9 L20.7 22.4 M17 11.6 L20.7 14.9 L25.9 13.8" stroke="#8e9499" fill="none" stroke-width="1.3"/><path d="M8.6 25.5 L9.1 21.1 L16 17.9 L17 11.6 L21.1 8.9" stroke="#e02828" stroke-width="1.5" fill="none"/><path d="M21.2 8.5 L21.6 4.5" stroke="#e02828" stroke-width="1.2" stroke-dasharray="1 1.2"/><polygon points="9.5,21.3 16.3,18.2 17.3,12 21.3,9.3 25.5,13.8 25.5,22.5 20.7,22.4 14.2,25.2 9,25.2" fill="#e8edf3" opacity="0.6"/></g>
<g transform="translate(918.8,82.3)"><path d="M0.5 13.5 L21 3.5 V11.5 L0.5 21 Z" fill="#a3a7ab" stroke="#000" stroke-width="1.1"/><path d="M5.5 0.5 L17.5 12 V20.5 L5.500 9 Z" fill="#a3a7ab" stroke="#000" stroke-width="1.1"/><path d="M12 7 V15.5" stroke="#2090e0" stroke-width="1.2"/></g>
<g transform="translate(947,81)"><path d="M22.5 1.5 L12.5 11.5" stroke="#a8601c" stroke-width="1.6"/><path d="M2 12.5 L12 9.5 L14 12.5 L12.5 19 L7 20.5 Z" fill="#f3c67c" stroke="#c8923c" stroke-width="0.9"/><path d="M5 14 L8 19.5 M8 12.5 L10.500 18.500" stroke="#c8923c" stroke-width="0.7"/><path d="M12.5 16 H23 M12.5 19.2 H23" stroke="#8a8a8a" stroke-width="1.1"/></g>
<g transform="translate(975.8,81.5)"><path d="M3.2 1 V14.500 M8.300 1 V14.500 M13.400 1 V14.500 M0.300 3.5 H16 M0.300 7.5 H16 M0.300 12 H16" stroke="#000" stroke-width="1.2"/><path d="M13.2 15.500 L16.300 18.300 L20.500 10.500" stroke="#1460a8" stroke-width="1.6" fill="none"/></g>
<rect x="3" y="119" width="28" height="1" fill="#f7fafd"/>
<path d="M11.5 127.500 V141.500 L14.800 138.500 L17.300 144.500 L19.800 143.400 L17.300 137.800 L21.800 137.600 Z" fill="#fff" stroke="#000" stroke-width="1.2"/>
<circle cx="13.1" cy="164.700" r="6.300" fill="none" stroke="#000" stroke-width="1.3"/><path d="M17.800 169.500 L25.500 176.900" stroke="#000" stroke-width="2.6"/><path d="M23.4 156.3 l3.8 3.2 l-3.800 3.200 Z" fill="#000"/>
<path d="M15.400 203.100 V191 M15.400 203.100 L7.500 206.500 M15.400 203.100 L23.500 206.500" stroke="#000" stroke-width="1.2" fill="none"/><path d="M13.500 193 L15.400 189.500 L17.300 193 Z M6 207.300 L8 204.500 L9.500 207.500 Z M24.800 207.300 L22.800 204.500 L21.300 207.500 Z" fill="#000"/><path d="M23.4 187.2 l3.8 3.2 l-3.800 3.200 Z" fill="#000"/>
<path d="M7.500 225.500 L11.500 221.500 H19.500 V227.500 H25 V233.500 L21 237.500 H7.500 Z" fill="#777" stroke="#000" stroke-width="1.3"/><path d="M19.500 227.500 L16 231 H21 M21 231 V237.500 M21 231 L25 227.500 M7.500 225.500 H16 V231 M16 225.500 L19.500 221.500" fill="none" stroke="#000" stroke-width="1"/><path d="M16 225.500 H7.500 V237.500 H21 V231 H16 Z" fill="#7a7a7a"/><path d="M16.200 231 H20.800 L24.500 227.800 H19.700 Z" fill="#e8eef6"/><path d="M23.4 218.0 l3.8 3.2 l-3.800 3.200 Z" fill="#000"/>
<rect x="7.200" y="250.0" width="7.800" height="4" fill="#8b0000"/><rect x="17" y="250.0" width="7.800" height="4" fill="#00008b"/>
<rect x="7.200" y="255.0" width="7.800" height="4" fill="#cc1010"/><rect x="17" y="255.0" width="7.800" height="4" fill="#109010"/>
<rect x="7.200" y="260.0" width="7.800" height="4" fill="#d08030"/><rect x="17" y="260.0" width="7.800" height="4" fill="#10a010"/>
<rect x="7.200" y="265.0" width="7.800" height="4" fill="#e0e020"/><rect x="17" y="265.0" width="7.800" height="4" fill="#3090f0"/>
<path d="M8 283.500 H18" stroke="#1414d0" stroke-width="1.2"/><path d="M16 281 L19.500 283.500 L16 286 " stroke="#1414d0" fill="none" stroke-width="1.100"/><path d="M5.300 300 H11.600 V288.400 Z" fill="#777" stroke="#000" stroke-width="0.9"/><path d="M17.300 300 H24 V288.400 Z" fill="#fff" stroke="#000" stroke-width="1"/><path d="M23.4 280.3 l3.8 3.2 l-3.800 3.200 Z" fill="#000"/>
<path d="M14 321 L20.200 315 L25.300 321 L20.200 327.200 Z" fill="#fff" stroke="#1414a0" stroke-width="1.2"/><path d="M14 321 H7 M20.200 315 L22.500 311.800 M20.200 327.200 L22.500 330.600" stroke="#000" stroke-width="1.1"/><path d="M9 319 L6.500 321 L9 323 M20.500 311.800 H22.800 V314 M20.500 330.800 H22.800 V328.600" stroke="#000" fill="none" stroke-width="1.100"/>
<path d="M9 346.500 H26 M9 353.400 H26 M15.400 343 V360 M22.500 343 V360" stroke="#1414d0" stroke-width="1" stroke-dasharray="2 1.3"/>
<circle cx="7.5" cy="346.5" r="1.900" fill="#fff" stroke="#000" stroke-width="1"/>
<circle cx="7.5" cy="353.4" r="1.900" fill="#fff" stroke="#000" stroke-width="1"/>
<circle cx="15.4" cy="361.5" r="1.900" fill="#fff" stroke="#000" stroke-width="1"/>
<circle cx="22.5" cy="361.5" r="1.900" fill="#fff" stroke="#000" stroke-width="1"/>
<path d="M23.4 343.0 l3.8 3.2 l-3.800 3.200 Z" fill="#000"/>
<path d="M6.500 375 V393.800 H25.300 Z" fill="#fff" stroke="#000" stroke-width="1.400"/><path d="M10.500 384.500 V390 H16 Z" fill="none" stroke="#000" stroke-width="1"/><path d="M8 392 H22" stroke="#000" stroke-width="0.8" stroke-dasharray="1 1"/><path d="M23.4 374.0 l3.8 3.2 l-3.800 3.200 Z" fill="#000"/>
<path d="M11.300 406.900 L24.400 420 M24.400 409.700 L9.400 421" stroke="#000" stroke-width="1.1"/><path d="M4.700 413.400 L18.800 425.600" stroke="#999" stroke-width="0.8"/><circle cx="15.500" cy="419" r="1.600" fill="none" stroke="#555" stroke-width="0.700"/><path d="M23.4 405.0 l3.8 3.2 l-3.800 3.200 Z" fill="#000"/>
<path d="M6.500 449.400 L20.600 437.200" stroke="#000" stroke-width="1.2"/><path d="M5.500 447 L6 450.300 L9.500 450 M17.500 437 L21 436.500 L20.800 440" stroke="#000" fill="none" stroke-width="1.200"/><text x="19.500" y="455" font-family="Liberation Serif,serif" font-weight="bold" font-size="15" text-anchor="middle" fill="#000">A</text>
<path d="M5.600 477.500 L12 470.600 H27.200 L20.600 477.500 Z" fill="#fff" stroke="#000" stroke-width="1"/><path d="M12 470.600 L10 472.700 H25.200" stroke="#108018" stroke-width="1.300" fill="none"/><path d="M5.600 482.600 L10.500 477.500 M20.600 482.600 L27.200 475.700 M5.600 482.600 H20.600" stroke="#666" stroke-width="0.900" fill="none"/><path d="M16.500 474 V484.500 L19 482 L22.500 479.500 Z" fill="#fff" stroke="#000" stroke-width="0.900"/>
<path d="M9 503 A8.500 8.500 0 0 1 13 499.300 M19.500 499.500 A8.500 8.500 0 0 1 24.300 505.500 M20 515.500 A8.500 8.500 0 0 1 14.500 516.300" stroke="#000" stroke-width="1.100" fill="none" stroke-dasharray="2.500 1"/><path d="M11 498.500 L14 499 L12.500 501.800 M22.500 503.500 L24.500 506.300 L25.800 503 M17.300 514.300 L14.200 516.300 L17.300 518.300" stroke="#000" fill="none" stroke-width="1.100"/><text x="16.300" y="503.500" font-size="7.500" font-family="Liberation Sans,sans-serif" fill="#1414b0" text-anchor="middle">1</text><text x="22.800" y="517" font-size="7.500" font-family="Liberation Sans,sans-serif" fill="#1414b0" text-anchor="middle">2</text><text x="9.800" y="517" font-size="7.500" font-family="Liberation Sans,sans-serif" fill="#1414b0" text-anchor="middle">3</text>
<path d="M7.500 547 V538 L13 533 H26 V541 M13 533 V541 M7.500 538 H20 V546 M20 538 L26 533" stroke="#888" stroke-width="0.900" fill="none"/><path d="M12 543 V536.500 H21.500 V543" stroke="#000" stroke-width="2.400" fill="none"/>
<path d="M7.500 566 V570.500 H15.400 V574.700 H23.500 V568.500" stroke="#000" stroke-width="1.200" fill="none"/><path d="M5.500 567.800 L7.500 564.800 L9.500 567.800 M21.500 570.300 L23.500 567.300 L25.500 570.300" stroke="#000" stroke-width="1.100" fill="none"/>
<path d="M6.500 601.600 H26" stroke="#1414d0" stroke-width="1.300"/><path d="M8.500 599.300 L5.500 601.600 L8.500 603.900 M24 599.300 L27 601.600 L24 603.900" stroke="#1414d0" stroke-width="1.200" fill="none"/><path d="M14.500 598 C16.500 598.500 16.300 596 16.300 594 C16.300 591.500 16.500 590.500 18.500 591" stroke="#1414d0" stroke-width="1.100" fill="none"/><rect x="5.300" y="606" width="22" height="2.200" fill="#000"/><rect x="9.300" y="608" width="3" height="2.500" fill="#000"/><rect x="20.300" y="608" width="3" height="2.500" fill="#000"/>
<path d="M12.500 634.500 L23 624.500" stroke="#444" stroke-width="4.500"/><path d="M12.500 634.500 L23 624.500" stroke="#bbb" stroke-width="2" stroke-dasharray="1 1"/><path d="M9.800 632 L15.500 637.500 L13 639 L10 636 Z" fill="#333"/><path d="M22 622.500 L25.800 626 L26.500 624 L24 621.800 Z" fill="#555"/><rect x="5" y="634" width="9" height="8" fill="#fff" opacity="0.55"/>
<path d="M10.500 656 L7.800 664 M21.500 656 L24.500 664 M10.500 656 Q12 654 13 656.500 M21.500 656 Q20 654 19 656.500" stroke="#000" stroke-width="1.100" fill="none"/><rect x="7" y="664.500" width="7.600" height="5.500" rx="1.800" fill="#fff" stroke="#000" stroke-width="1.500"/><rect x="17.300" y="664.500" width="7.600" height="5.500" rx="1.800" fill="#fff" stroke="#000" stroke-width="1.500"/><path d="M14.500 666.300 H17.500" stroke="#000" stroke-width="1.300"/>
<path d="M12 688 L24.500 701.500" stroke="#000" stroke-width="4.200" stroke-linecap="round"/><path d="M12.500 688.500 L24.300 701.300" stroke="#c8c8c8" stroke-width="1.800" stroke-linecap="round"/><path d="M6 688.500 A5 5 0 1 0 12.500 683.300 L12 687.300 L9 689 Z" fill="#e8e8e8" stroke="#000" stroke-width="1.300"/>
<path d="M16 714.500 L26.300 724.800 L16 735.200 L5.700 724.800 Z" fill="#666"/><rect x="14.800" y="722.800" width="2.500" height="7" fill="#fff"/><circle cx="16" cy="720" r="1.500" fill="#fff"/>
<path d="M44.300 441 L48.400 445.300 L52.500 441 M44.300 449.600 L48.400 445.300 L52.500 449.600" stroke="#1414d8" stroke-width="1.500" fill="none"/><path d="M46.700 443.400 L48.400 445.300 L50.100 443.400 Z M46.700 447.200 L48.400 445.300 L50.100 447.200 Z" fill="#1414d8"/>
<path d="M88.500 787.500 V824.500 H56" stroke="#0f8aa6" stroke-width="3.200" fill="none"/>
<text x="88.300" y="780" font-family="Liberation Sans,sans-serif" font-weight="bold" font-size="13" text-anchor="middle" fill="#0f8aa6">Z</text>
<text x="43.300" y="829.500" font-family="Liberation Sans,sans-serif" font-weight="bold" font-size="13" text-anchor="middle" fill="#0f8aa6">Y</text>
<text x="67" y="830.800" font-family="Liberation Sans,sans-serif" font-weight="bold" font-size="13" text-anchor="middle" fill="#0f8aa6">X</text>
<circle cx="43.4" cy="845.5" r="3.700" fill="none" stroke="#000" stroke-width="1.300"/><path d="M46.199999999999996 848.3 l3.800 3.800" stroke="#000" stroke-width="2"/><path d="M41.400 845.500 H45.400 M43.400 843.500 V847.500" stroke="#000" stroke-width="1"/>
<circle cx="62.4" cy="845.5" r="3.700" fill="none" stroke="#000" stroke-width="1.300"/><path d="M65.2 848.3 l3.800 3.800" stroke="#000" stroke-width="2"/><path d="M60.400 845.500 H64.400" stroke="#000" stroke-width="1"/>
<path d="M78.500 844 V842 H80.500 M85.300 842 H87.300 V844 M87.300 849 V851 H85.300 M80.500 851 H78.500 V849 M78.500 842 L81.500 845 M87.300 842 L84.300 845 M87.300 851 L84.300 848 M78.500 851 L81.500 848" stroke="#000" stroke-width="1.200" fill="none"/>
<path d="M101.400 841.500 V851.500 M96.400 846.500 H106.400" stroke="#000" stroke-width="1.200"/><path d="M99.600 843.300 L101.400 841 L103.200 843.300 M99.600 849.700 L101.400 852 L103.200 849.700 M98.200 844.700 L96 846.500 L98.200 848.300 M104.600 844.700 L106.800 846.500 L104.600 848.300" stroke="#000" stroke-width="1.100" fill="none"/>
<path d="M124 843.500 A4.500 4.200 0 1 0 125 848 H120.500" stroke="#000" stroke-width="1.200" fill="none"/><path d="M123 846 L125.500 848.300 L123 850.500" stroke="#000" fill="none" stroke-width="1.100"/>
<circle cx="141.3" cy="845.5" r="3.700" fill="none" stroke="#000" stroke-width="1.300"/><path d="M144.10000000000002 848.3 l3.800 3.800" stroke="#000" stroke-width="2"/><path d="M134 846 H139.500 M136.500 843.500 L133.800 846 L136.500 848.500 Z" stroke="#000" stroke-width="1.200" fill="#000"/>
<circle cx="155.3" cy="845.5" r="3.700" fill="none" stroke="#b4b4b4" stroke-width="1.300"/><path d="M158.10000000000002 848.3 l3.800 3.800" stroke="#b4b4b4" stroke-width="2"/><path d="M157 845.500 H163 M160.500 843 L163.300 845.500 L160.500 848 Z" stroke="#a8a8a8" stroke-width="1.200" fill="#a8a8a8"/>
<path d="M177.500 842.500 L173 846.700 L177.500 851" stroke="#505050" stroke-width="2" fill="none"/>
<rect x="184" y="840" width="17" height="14" fill="#cdcdcd"/>
<path d="M1360.500 842.500 L1365 846.700 L1360.500 851" stroke="#505050" stroke-width="2" fill="none"/>
<rect x="1087" y="858.500" width="19" height="17.500" fill="#a9c8ea"/><rect x="1089" y="860" width="15" height="15" fill="#f5f314"/><path d="M1090 861 L1103 874 M1103 861 L1090 874" stroke="#000" stroke-width="1.100"/><circle cx="1096.500" cy="867.500" r="1.700" fill="#000"/>
<rect x="1107" y="858.500" width="19.500" height="17.500" fill="#a9c8ea"/><rect x="1109" y="860" width="16.500" height="15.300" fill="#f5f314"/><rect x="1113.1" y="860" width="0.900" height="15.300" fill="#a8862a"/><rect x="1117.2" y="860" width="0.900" height="15.300" fill="#a8862a"/><rect x="1121.3" y="860" width="0.900" height="15.300" fill="#a8862a"/><rect x="1109" y="863.9" width="16.500" height="0.900" fill="#a8862a"/><rect x="1109" y="867.8" width="16.500" height="0.900" fill="#a8862a"/><rect x="1109" y="871.7" width="16.500" height="0.900" fill="#a8862a"/><path d="M1111.500 862 V872.500 L1114 870.300 L1117.800 867.600 Z" fill="#fff" stroke="#000" stroke-width="1"/>
<rect x="1130.700" y="861" width="10.800" height="14" fill="#fff" stroke="#000" stroke-width="1.300"/><rect x="1131" y="863.5" width="10" height="1.400" fill="#000"/><rect x="1131" y="866.5" width="10" height="1.400" fill="#000"/><rect x="1131" y="869.5" width="10" height="1.400" fill="#000"/><rect x="1131" y="872.3" width="10" height="1.400" fill="#000"/><circle cx="1130.800" cy="862.500" r="1.200" fill="#fff" stroke="#000" stroke-width="0.700"/>
<path d="M1150 873.500 V866.500 L1155 862 H1163 V868 M1155 862 V868 M1150 866.500 H1158 V873.500 M1158 866.500 L1163 862" stroke="#8a939c" stroke-width="1" fill="none"/><path d="M1154 871 V866 H1161.500 V871" stroke="#000" stroke-width="2.200" fill="none"/>
<path d="M1170.500 873.500 V867.500 L1176 862.500" stroke="#f018e8" stroke-width="2.600" fill="none"/><path d="M1173.500 870 V866 H1179 V871 M1176.500 866 V863 H1182.500 V868.500" stroke="#000" stroke-width="2.200" fill="none"/>
<rect x="1190.500" y="865" width="9" height="9" fill="none" stroke="#a0a8b0" stroke-dasharray="1 1"/><rect x="1196.800" y="861.800" width="5.500" height="5.500" fill="#e8eef5" stroke="#a0a8b0" stroke-width="1.400"/>
<path d="M1214.500 867.700 L1219.500 862.500 L1223 867.700 L1219.500 873 Z" fill="#fff" stroke="#1414a0" stroke-width="1.100"/><path d="M1214.500 867.700 H1209 M1219.500 862.500 L1221.500 860.500 M1219.500 873 L1221.500 875.300" stroke="#000" stroke-width="1.100"/><path d="M1210.500 866 L1208.500 867.700 L1210.500 869.400 M1220 860.300 H1222 V862 M1220 875.500 H1222 V873.800" stroke="#000" fill="none" stroke-width="1.100"/>
<path d="M1231.500 864.500 V867.500 H1237 V870.300 H1242.500 V866.500" stroke="#a9b3be" stroke-width="1.100" fill="none"/><path d="M1230 866 L1231.500 864 L1233 866 M1241 868 L1242.500 866 L1244 868" stroke="#a9b3be" stroke-width="1" fill="none"/>
<path d="M1250.500 873 H1264 M1252.500 871.300 L1250 873 L1252.500 874.700 M1262 871.300 L1264.500 873 L1262 874.700" stroke="#a0a8b2" stroke-width="1.100" fill="none"/><path d="M1255.500 869.500 C1258 870 1257.500 866 1257.500 864 C1257.500 861.500 1258 860.300 1260 861" stroke="#a0a8b2" stroke-width="1.100" fill="none"/>
<rect x="1269.700" y="861.800" width="12" height="12" fill="#fff" stroke="#000" stroke-width="1.400"/><rect x="1272.7" y="862" width="0.900" height="11.500" fill="#70757c"/><rect x="1270" y="864.8" width="11.500" height="0.900" fill="#70757c"/><rect x="1275.7" y="862" width="0.900" height="11.500" fill="#70757c"/><rect x="1270" y="867.8" width="11.500" height="0.900" fill="#70757c"/><rect x="1278.7" y="862" width="0.900" height="11.500" fill="#70757c"/><rect x="1270" y="870.8" width="11.500" height="0.900" fill="#70757c"/>
<path d="M1292.400 862 V872 M1299 862 V872" stroke="#000" stroke-width="1.400"/><path d="M1289.800 869.500 L1292.400 873.500 L1295 869.500 Z M1296.400 869.500 L1299 873.500 L1301.600 869.500 Z" fill="#000"/>
<path d="M1312.100 863 V875.500" stroke="#e01828" stroke-width="1.300"/><path d="M1309.700 865.800 L1312.100 862 L1314.500 865.800" stroke="#e01828" stroke-width="1.200" fill="none"/><path d="M1309.900 868.800 L1312.100 865.500 L1314.300 868.800" stroke="#e01828" stroke-width="1" fill="none"/><path d="M1319.900 860.300 V869.500" stroke="#1414b0" stroke-width="1.300"/><circle cx="1319.900" cy="871.500" r="2" fill="#fff" stroke="#1414b0" stroke-width="1.200"/>
<path d="M1333.600 869.700 V862.500" stroke="#18a028" stroke-width="1.300"/><path d="M1331.800 863.800 L1333.600 861 L1335.400 863.800 Z" fill="#18a028"/><path d="M1333.600 869.700 H1340.500" stroke="#98b020" stroke-width="1.300"/><path d="M1339.500 868 L1342 869.700 L1339.500 871.400 Z" fill="#98b020"/><path d="M1333.600 869.700 L1329.800 873" stroke="#e01828" stroke-width="1.300"/><circle cx="1329.500" cy="873.300" r="1.300" fill="#e01828"/>
<text x="1347.500" y="873.500" font-family="DejaVu Sans Mono,Liberation Mono,monospace" font-size="11" fill="#000">1</text><text x="1355" y="869" font-family="DejaVu Sans,Liberation Sans,sans-serif" font-size="9" fill="#000">2</text>
<rect x="1366.500" y="858.500" width="20" height="18" fill="#a9c8ea"/><rect x="1369.500" y="860.200" width="15.500" height="15.500" fill="#f5f314"/><path d="M1371 864.500 H1382.500 V869.500 H1377.500 V875" stroke="#507818" stroke-width="1.300" fill="none"/><path d="M1374.500 861 V875" stroke="#507818" stroke-width="1.200"/><path d="M1371 874.500 L1383.500 861.500" stroke="#000" stroke-width="1.100"/>
<text x="8.500" y="17.300" font-family="Liberation Sans,sans-serif" font-weight="bold" font-size="14.500" fill="#3a939b" stroke="#3a939b" stroke-width="0.500" textLength="16" lengthAdjust="spacingAndGlyphs">X5</text><rect x="8.500" y="18.200" width="16.500" height="2.200" fill="#4a8f98"/>
<path d="M1271.500 15.500 H1281.500" stroke="#000" stroke-width="1"/><rect x="1316.500" y="10.500" width="9" height="9" fill="none" stroke="#000" stroke-width="1"/><path d="M1362.500 10.500 L1372.500 20.500 M1372.500 10.500 L1362.500 20.500" stroke="#000" stroke-width="1.100"/>
<rect x="140" y="10" width="305" height="11" rx="5" fill="#ececec" filter="url(#blr)"/>
</svg>
<div id="frame"></div>
</div>
</body>
</html>
